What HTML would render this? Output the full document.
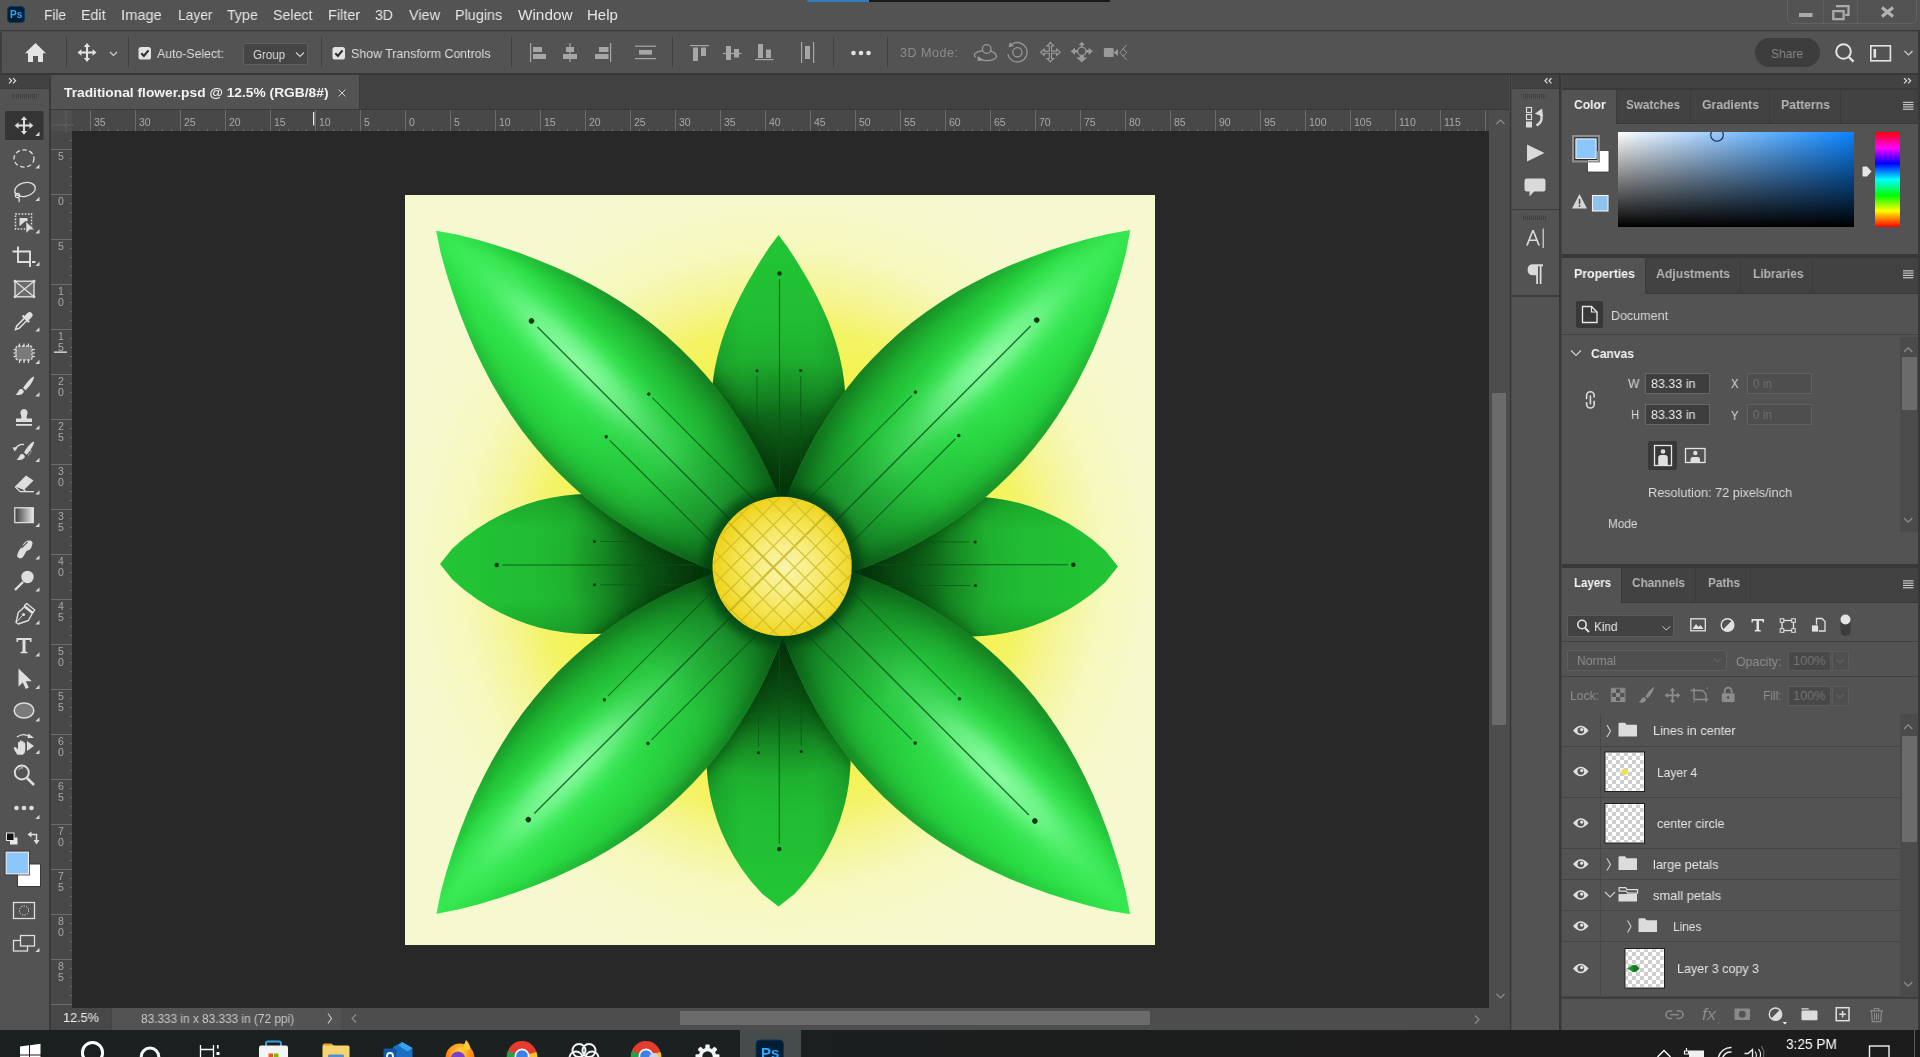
<!DOCTYPE html>
<html><head><meta charset="utf-8"><title>Photoshop</title><style>
html,body{margin:0;padding:0}
body{width:1920px;height:1057px;position:relative;overflow:hidden;background:#535353;font-family:"Liberation Sans",sans-serif}
.b{position:absolute;display:block}
.t{position:absolute;white-space:nowrap;transform-origin:0 50%;will-change:transform;font-family:"Liberation Sans",sans-serif}
</style></head><body>
<div class="b" style="left:0px;top:0px;width:1920px;height:30px;background:#535353;"></div>
<div class="b" style="left:0px;top:30px;width:1920px;height:1px;background:#3b3b3b;"></div>
<div class="b" style="left:0px;top:31px;width:1920px;height:1px;background:#4b4b4b;"></div>
<div class="b" style="left:807px;top:0px;width:62px;height:2px;background:#2f7fc0;border-radius:0 0 0 2px"></div>
<div class="b" style="left:869px;top:0px;width:241px;height:1.5px;background:#1a1a1a;"></div>
<div class="b" style="left:7px;top:6px;width:18px;height:17px;background:#001e36;border-radius:4px;border:1px solid #0c3a5e;box-sizing:border-box"></div><span class="t" style="left:10.20px;top:10.14px;font-size:10px;line-height:10px;color:#31a8ff;font-weight:bold;transform:scaleX(0.9646);">Ps</span>
<span class="t" style="left:44.00px;top:7.10px;font-size:15px;line-height:15px;color:#e6e6e6;transform:scaleX(0.9103);">File</span>
<span class="t" style="left:81.30px;top:7.10px;font-size:15px;line-height:15px;color:#e6e6e6;transform:scaleX(0.9479);">Edit</span>
<span class="t" style="left:121.20px;top:7.10px;font-size:15px;line-height:15px;color:#e6e6e6;transform:scaleX(0.9787);">Image</span>
<span class="t" style="left:177.50px;top:7.10px;font-size:15px;line-height:15px;color:#e6e6e6;transform:scaleX(0.9195);">Layer</span>
<span class="t" style="left:227.20px;top:7.10px;font-size:15px;line-height:15px;color:#e6e6e6;transform:scaleX(0.9472);">Type</span>
<span class="t" style="left:273.30px;top:7.10px;font-size:15px;line-height:15px;color:#e6e6e6;transform:scaleX(0.9451);">Select</span>
<span class="t" style="left:327.50px;top:7.10px;font-size:15px;line-height:15px;color:#e6e6e6;transform:scaleX(0.9660);">Filter</span>
<span class="t" style="left:375.00px;top:7.10px;font-size:15px;line-height:15px;color:#e6e6e6;transform:scaleX(0.9388);">3D</span>
<span class="t" style="left:408.70px;top:7.10px;font-size:15px;line-height:15px;color:#e6e6e6;transform:scaleX(0.9615);">View</span>
<span class="t" style="left:455.30px;top:7.10px;font-size:15px;line-height:15px;color:#e6e6e6;transform:scaleX(0.9594);">Plugins</span>
<span class="t" style="left:517.50px;top:7.10px;font-size:15px;line-height:15px;color:#e6e6e6;transform:scaleX(1.0216);">Window</span>
<span class="t" style="left:587.00px;top:7.10px;font-size:15px;line-height:15px;color:#e6e6e6;">Help</span>
<svg class="b" style="left:0;top:0" width="1920" height="1057" viewBox="0 0 1920 1057"><rect x="1787.5" y="-6" width="129" height="29.5" rx="5" fill="none" stroke="#626262" stroke-width="1"/><rect x="1823" y="0" width="1" height="23" fill="#5e5e5e"/><rect x="1857" y="0" width="1" height="23" fill="#5e5e5e"/><rect x="1799" y="13" width="13.5" height="4" fill="#ababab"/><path d="M1836 6.2h12.5v8.6h-3.4 M1833.3 11.2h10.3v8h-10.3z" fill="none" stroke="#ababab" stroke-width="2.3"/><path d="M1882 7.5L1893 16.5M1893 7.5L1882 16.5" stroke="#b4b4b4" stroke-width="3" fill="none"/></svg>
<div class="b" style="left:0px;top:32px;width:1918px;height:41px;background:#535353;"></div>
<div class="b" style="left:0px;top:32px;width:2px;height:41px;background:#3e3e3e;"></div>
<div class="b" style="left:0px;top:73px;width:1920px;height:1.5px;background:#383838;"></div>
<div class="b" style="left:65.5px;top:37px;width:1px;height:30px;background:#404040;"></div>
<div class="b" style="left:127.5px;top:37px;width:1px;height:30px;background:#404040;"></div>
<div class="b" style="left:321px;top:37px;width:1px;height:30px;background:#404040;"></div>
<div class="b" style="left:510.5px;top:37px;width:1px;height:30px;background:#404040;"></div>
<div class="b" style="left:672px;top:37px;width:1px;height:30px;background:#404040;"></div>
<div class="b" style="left:833px;top:37px;width:1px;height:30px;background:#404040;"></div>
<div class="b" style="left:886.5px;top:37px;width:1px;height:30px;background:#404040;"></div>
<span class="t" style="left:157.00px;top:47.00px;font-size:13px;line-height:13px;color:#dcdcdc;transform:scaleX(0.9461);">Auto-Select:</span>
<div class="b" style="left:243px;top:43px;width:65px;height:22px;background:#454545;border:1px solid #5f5f5f;box-sizing:border-box;border-radius:2px"></div>
<span class="t" style="left:253.00px;top:47.50px;font-size:13px;line-height:13px;color:#dcdcdc;transform:scaleX(0.8856);">Group</span>
<span class="t" style="left:351.00px;top:47.00px;font-size:13px;line-height:13px;color:#dcdcdc;transform:scaleX(0.9511);">Show Transform Controls</span>
<span class="t" style="left:899.50px;top:46.92px;font-size:12.5px;line-height:12.5px;color:#8c8c8c;transform:scaleX(1.0057);letter-spacing:0.5px;">3D Mode:</span>
<div class="b" style="left:1755px;top:38px;width:65px;height:29px;background:#3d3d3d;border-radius:15px"></div>
<span class="t" style="left:1771.00px;top:46.50px;font-size:13px;line-height:13px;color:#858585;transform:scaleX(0.9224);">Share</span>
<svg class="b" style="left:0;top:0" width="1920" height="1057" viewBox="0 0 1920 1057"><rect x="6" y="38" width="1" height="1" fill="#444"/><rect x="6" y="41" width="1" height="1" fill="#444"/><rect x="6" y="44" width="1" height="1" fill="#444"/><rect x="6" y="47" width="1" height="1" fill="#444"/><rect x="6" y="50" width="1" height="1" fill="#444"/><rect x="6" y="53" width="1" height="1" fill="#444"/><rect x="6" y="56" width="1" height="1" fill="#444"/><rect x="6" y="59" width="1" height="1" fill="#444"/><rect x="6" y="62" width="1" height="1" fill="#444"/><rect x="6" y="65" width="1" height="1" fill="#444"/><path d="M35.5 43L25 53.2H28V62H33V56H38V62H43V53.2H46Z" fill="#e4e4e4"/><path transform="translate(87 52.5)" d="M0 -9.5L3.2 -5.6H1V-1H5.6V-3.2L9.5 0L5.6 3.2V1H1V5.6H3.2L0 9.5L-3.2 5.6H-1V1H-5.6V3.2L-9.5 0L-5.6 -3.2V-1H-1V-5.6H-3.2Z" fill="#e4e4e4"/><path d="M110 52L113.5 55.5L117 52" stroke="#cfcfcf" stroke-width="1.2" fill="none"/><rect x="138.5" y="47" width="12.5" height="12.5" rx="2.6" fill="#e2e2e2"/><path d="M141.3 53.2l2.6 2.8l4.6 -5.6" stroke="#2f2f2f" stroke-width="2.1" fill="none"/><rect x="332.5" y="47" width="12.5" height="12.5" rx="2.6" fill="#e2e2e2"/><path d="M335.3 53.2l2.6 2.8l4.6 -5.6" stroke="#2f2f2f" stroke-width="2.1" fill="none"/><path d="M296 52.5L300 56.5L304 52.5" stroke="#cfcfcf" stroke-width="1.2" fill="none"/><g fill="#a6a6a6"><rect x="530" y="43" width="1.2" height="19"/><rect x="533" y="47" width="9" height="5"/><rect x="533" y="54" width="13" height="5"/><rect x="569.4" y="43" width="1.2" height="19"/><rect x="566" y="47" width="8" height="5"/><rect x="563" y="54" width="14" height="5"/><rect x="610" y="43" width="1.2" height="19"/><rect x="599" y="47" width="9.5" height="5"/><rect x="595" y="54" width="13.5" height="5"/><rect x="635" y="45.6" width="21" height="1.2"/><rect x="635" y="58" width="21" height="1.2"/><rect x="639" y="50" width="13" height="4.6"/><rect x="690" y="45" width="19" height="1.2"/><rect x="693" y="47.5" width="5" height="13.5"/><rect x="701" y="47.5" width="5" height="8.5"/><rect x="723" y="52.9" width="18.5" height="1.2"/><rect x="726" y="46" width="5" height="14"/><rect x="734" y="49" width="5" height="8.5"/><rect x="755" y="59" width="18.5" height="1.2"/><rect x="758" y="44" width="5" height="14"/><rect x="766" y="49.5" width="5" height="8.5"/><rect x="801" y="42" width="1.2" height="21"/><rect x="813" y="42" width="1.2" height="21"/><rect x="805" y="46" width="5" height="13"/></g><circle cx="853.5" cy="53" r="2.3" fill="#e2e2e2"/><circle cx="861" cy="53" r="2.3" fill="#e2e2e2"/><circle cx="868.5" cy="53" r="2.3" fill="#e2e2e2"/><g fill="none" stroke="#9a9a9a" stroke-width="1.25"><circle cx="986.700" cy="49" r="4.300"/><path d="M982.300 50.600C976 51.500 972.500 54.500 975.500 57.200M983.500 60.300C990 61.300 997.500 59.200 996.300 55.500C995.600 53.500 993.200 52 990.800 51.200"/><circle cx="1017.400" cy="52.200" r="4.600"/><path d="M1011.800 44.300A9.700 9.700 0 1 1 1007.900 54.200"/><path transform="translate(1050.400 52.200)" d="M0 -9.800L3.300 -6.300H1.100V-1.100H6.300V-3.300L9.800 0L6.300 3.300V1.100H1.100V6.300H3.300L0 9.800L-3.300 6.300H-1.100V1.100H-6.300V3.300L-9.800 0L-6.300 -3.300V-1.100H-1.100V-6.300H-3.300Z" stroke-width="1.100"/></g><path d="M977.500 56.300l7.800 4.300l-7.600 0.300z" fill="#9a9a9a"/><path d="M1008.600 47.300l1.200 -5l4 3.600z" fill="#9a9a9a"/><g fill="#9a9a9a"><circle cx="1081.800" cy="51.300" r="4.200" fill="none" stroke="#9a9a9a" stroke-width="1.250"/><path d="M1081.800 41.800l3 3.200h-1.900v1.600h-2.200v-1.600h-1.900z"/><path d="M1070.700 51.300l4.300 -3.600v2.300h2.600v2.600h-2.600v2.300z"/><path d="M1092.900 51.300l-4.300 -3.600v2.300h-2.600v2.600h2.600v2.300z"/><path d="M1081.800 62.300l-5.600 -4.800h3.400v-1.700h4.400v1.700h3.400z"/></g><rect x="1103.900" y="48" width="9.800" height="9" rx="1.300" fill="#9a9a9a"/><path d="M1113.700 52.500l4.300 -3.400v6.800z" fill="#9a9a9a"/><path d="M1126.600 45L1120 52.500L1126.600 60M1123.300 48.800L1126.700 52.500L1123.300 56.200" stroke="#9a9a9a" stroke-width="1" fill="none"/><circle cx="1843.5" cy="51.5" r="7.3" fill="none" stroke="#e4e4e4" stroke-width="2"/><path d="M1848.8 57L1853.5 61.6" stroke="#e4e4e4" stroke-width="2.4"/><rect x="1870.8" y="45.8" width="19.6" height="15" fill="none" stroke="#e4e4e4" stroke-width="1.6"/><rect x="1873.5" y="49" width="2.6" height="8.6" fill="#e4e4e4"/><path d="M1904.5 51L1908.5 55L1912.5 51" stroke="#cfcfcf" stroke-width="1.2" fill="none"/></svg>
<div class="b" style="left:0px;top:74.5px;width:49px;height:955.5px;background:#535353;"></div>
<div class="b" style="left:0px;top:74.5px;width:49px;height:13.5px;background:#424242;"></div>
<div class="b" style="left:0px;top:88px;width:49px;height:1px;background:#3c3c3c;"></div>
<div class="b" style="left:49px;top:74.5px;width:2px;height:955.5px;background:#3a3a3a;"></div>
<svg class="b" style="left:0;top:0" width="1920" height="1057" viewBox="0 0 1920 1057"><path d="M9 78.2L11.6 80.8L9 83.4M13 78.2L15.6 80.8L13 83.4" stroke="#e0e0e0" stroke-width="1.2" fill="none"/><rect x="12" y="94" width="1" height="4.5" fill="#404040"/><rect x="14" y="94" width="1" height="4.5" fill="#404040"/><rect x="16" y="94" width="1" height="4.5" fill="#404040"/><rect x="18" y="94" width="1" height="4.5" fill="#404040"/><rect x="20" y="94" width="1" height="4.5" fill="#404040"/><rect x="22" y="94" width="1" height="4.5" fill="#404040"/><rect x="24" y="94" width="1" height="4.5" fill="#404040"/><rect x="26" y="94" width="1" height="4.5" fill="#404040"/><rect x="28" y="94" width="1" height="4.5" fill="#404040"/><rect x="30" y="94" width="1" height="4.5" fill="#404040"/><rect x="32" y="94" width="1" height="4.5" fill="#404040"/><rect x="34" y="94" width="1" height="4.5" fill="#404040"/><rect x="36" y="94" width="1" height="4.5" fill="#404040"/><rect x="5" y="111" width="38.5" height="29" rx="1.5" fill="#353535"/><path transform="translate(24 125.5) scale(0.98)" d="M0 -9.5L3.2 -5.6H1V-1H5.6V-3.2L9.5 0L5.6 3.2V1H1V5.6H3.2L0 9.5L-3.2 5.6H-1V1H-5.6V3.2L-9.5 0L-5.6 -3.2V-1H-1V-5.6H-3.2Z" fill="#dedede"/><ellipse cx="24" cy="158.5" rx="10" ry="8.6" fill="none" stroke="#dedede" stroke-width="1.3" stroke-dasharray="4.4 2.6"/><ellipse cx="25" cy="189.5" rx="10.5" ry="6.8" fill="none" stroke="#dedede" stroke-width="1.4" transform="rotate(-14 25 189.5)"/><circle cx="17.5" cy="195.5" r="2.2" fill="none" stroke="#dedede" stroke-width="1.2"/><path d="M18 197.5q2.5 2 0.6 4.6" stroke="#dedede" stroke-width="1.2" fill="none"/><rect x="15.5" y="214" width="16" height="15" fill="none" stroke="#dedede" stroke-width="1.5" stroke-dasharray="1.6 1.5"/><path d="M19.5 218h8v3.2l-2.3 0l-5.7 5z" fill="#dedede"/><path d="M26 221.5l8.5 8.2h-4.6l-3.9 3.6z" fill="#dedede" stroke="#535353" stroke-width="0.6"/><path d="M18 246.500v15.500h12M12.500 251.500h17.500v15.500" stroke="#dedede" stroke-width="1.900" fill="none"/><rect x="32" y="261" width="3.500" height="2" fill="#dedede"/><rect x="15" y="281.200" width="19" height="15.600" fill="#6c6c6c" stroke="#dedede" stroke-width="1.400"/><path d="M15 281.2L34 296.8M34 281.2L15 296.8" stroke="#dedede" stroke-width="1.2"/><circle cx="15" cy="281.2" r="1.4" fill="#dedede"/><circle cx="34" cy="281.2" r="1.4" fill="#dedede"/><circle cx="15" cy="296.8" r="1.4" fill="#dedede"/><circle cx="34" cy="296.8" r="1.4" fill="#dedede"/><path d="M15.5 329.5l1.2 -3.6l8.5 -8.5l2.4 2.4l-8.5 8.5z" fill="none" stroke="#dedede" stroke-width="1.5"/><path d="M24.5 316l3 -3q2.2 -2 4.2 0t0 4.2l-3 3l1.2 1.2l-1.5 1.5l-6.6 -6.6l1.5 -1.5z" fill="#dedede"/><rect x="16" y="346" width="16" height="14" rx="2" fill="#7a7a7a" stroke="#dedede" stroke-width="1.3" stroke-dasharray="2.4 1.6"/><rect x="18.9" y="343.5" width="1.2" height="3" fill="#dedede"/><rect x="18.9" y="360" width="1.2" height="3" fill="#dedede"/><rect x="23.4" y="343.5" width="1.2" height="3" fill="#dedede"/><rect x="23.4" y="360" width="1.2" height="3" fill="#dedede"/><rect x="27.9" y="343.5" width="1.2" height="3" fill="#dedede"/><rect x="27.9" y="360" width="1.2" height="3" fill="#dedede"/><rect x="13.5" y="348.9" width="3" height="1.2" fill="#dedede"/><rect x="32" y="348.9" width="3" height="1.2" fill="#dedede"/><rect x="13.5" y="352.4" width="3" height="1.2" fill="#dedede"/><rect x="32" y="352.4" width="3" height="1.2" fill="#dedede"/><rect x="13.5" y="355.9" width="3" height="1.2" fill="#dedede"/><rect x="32" y="355.9" width="3" height="1.2" fill="#dedede"/><path d="M33.5 376.5q-5 3 -10.5 11.5l2.6 2.2q7 -7 8.6 -13z" fill="#dedede"/><path d="M22 389q-3 -0.4 -3.8 2.4q-0.5 2.2 -2.8 3q5.4 1.8 8 -1.6q1.2 -1.8 -1.4 -3.8z" fill="#dedede"/><path d="M24 409a3.6 3.6 0 0 1 3.3 5.2q-1 2 -0.6 4.3h5.3v3.6h-16v-3.6h5.3q0.4 -2.3 -0.6 -4.3a3.6 3.6 0 0 1 3.3 -5.2z" fill="#dedede"/><rect x="16" y="424" width="16" height="1.8" fill="#dedede"/><path d="M33.5 441.5q-5 3 -9.5 11l2.6 2.2q6 -6.500 7.6 -12.500z" fill="#dedede"/><path d="M23 454q-3 -0.400 -3.800 2.400q-0.500 2.200 -2.800 3q5.400 1.800 8 -1.600q1.200 -1.800 -1.400 -3.800z" fill="#dedede"/><path d="M15.500 449.500q2 -5.500 8.500 -5" stroke="#dedede" stroke-width="1.300" fill="none"/><path d="M12.500 447.500l5 -0.500l-2.600 4.500z" fill="#dedede"/><path d="M28 455q3 -1 3 -5" stroke="#dedede" stroke-width="1" stroke-dasharray="1.2 1.2" fill="none"/><path d="M15 486.500l11 -11l7.500 5l-9.500 9.500z" fill="#dedede"/><path d="M15 486.500l4.800 5h6l-6 -6.200" fill="none" stroke="#dedede" stroke-width="1.200"/><rect x="20" y="491" width="14" height="1.300" fill="#dedede"/><defs><linearGradient id="tg" x1="0" y1="0" x2="1" y2="0"><stop offset="0" stop-color="#3c3c3c"/><stop offset="1" stop-color="#e8e8e8"/></linearGradient></defs><rect x="14.800" y="507.800" width="18.500" height="14.800" fill="url(#tg)" stroke="#dedede" stroke-width="1.300"/><path d="M17 556.500q1 -6 5.500 -10.500q2 -6 8 -5.500q3 1 1.500 5q-1 4.500 -5.500 5.500l-2.500 4.500q-1.500 3 -4.500 3z" fill="#dedede"/><path d="M21.500 548l6 -6" stroke="#535353" stroke-width="1.100"/><circle cx="27.500" cy="577" r="6.200" fill="#dedede"/><path d="M23 582l-8 8" stroke="#dedede" stroke-width="2.400"/><path d="M16 622.500l2.300 -10l6 -5.500l8 6.500l-4 7l-10 3.500z M24.500 605.500l2.200 -2l8 6.500l-1.500 2.500z" fill="none" stroke="#dedede" stroke-width="1.400" stroke-linejoin="round"/><circle cx="23.500" cy="614.500" r="1.600" fill="#dedede"/><path d="M16.500 622l6 -6.500" stroke="#dedede" stroke-width="1"/><path d="M16.500 638h15v4h-1.300l-0.500 -2h-4.200v11.500l2 0.500v1.300h-7v-1.300l2 -0.500v-11.500h-4.200l-0.500 2h-1.300z" fill="#dedede"/><path d="M18.500 668.500v18l4.300 -4l3 6.500l3 -1.400l-3 -6.300h6z" fill="#dedede"/><ellipse cx="24" cy="710.500" rx="9.800" ry="7.600" fill="#7a7a7a" stroke="#dedede" stroke-width="1.500"/><path d="M16 752.500q-2.500 -3.500 -2 -5q1 -1 2.500 0.500l1.500 1.500v-7q0.800 -1.300 1.800 0v-1.500q0.900 -1.300 1.900 0v0.700q0.900 -1.200 1.900 0v1.300q0.900 -1 1.700 0.200v6.500q0 3.500 -2.500 5h-5.500z" fill="#dedede"/><path d="M27 741l7 5l-7 5z" fill="#dedede"/><path d="M17 737q6 -4.500 12.500 -0.500" stroke="#dedede" stroke-width="1.300" fill="none"/><path d="M28.500 733.500l5.500 4.500h-6.500z" fill="#dedede"/><circle cx="21.800" cy="772.500" r="7" fill="none" stroke="#dedede" stroke-width="1.900"/><path d="M27 778l7 7" stroke="#dedede" stroke-width="2.600"/><path d="M18.500 770q1.500 -2.600 4.500 -2.200" stroke="#dedede" stroke-width="1" fill="none"/><circle cx="16.5" cy="808" r="2.300" fill="#dedede"/><circle cx="24" cy="808" r="2.300" fill="#dedede"/><circle cx="31.5" cy="808" r="2.300" fill="#dedede"/><path d="M39.5 136l0 -4.2l-4.2 4.2z" fill="#d6d6d6"/><path d="M39.5 168.5l0 -4.2l-4.2 4.2z" fill="#d6d6d6"/><path d="M39.5 201l0 -4.2l-4.2 4.2z" fill="#d6d6d6"/><path d="M39.5 233.5l0 -4.2l-4.2 4.2z" fill="#d6d6d6"/><path d="M39.5 266l0 -4.2l-4.2 4.2z" fill="#d6d6d6"/><path d="M39.5 331.5l0 -4.2l-4.2 4.2z" fill="#d6d6d6"/><path d="M39.5 364l0 -4.2l-4.2 4.2z" fill="#d6d6d6"/><path d="M39.5 396.5l0 -4.2l-4.2 4.2z" fill="#d6d6d6"/><path d="M39.5 429.5l0 -4.2l-4.2 4.2z" fill="#d6d6d6"/><path d="M39.5 462l0 -4.2l-4.2 4.2z" fill="#d6d6d6"/><path d="M39.5 494.5l0 -4.2l-4.2 4.2z" fill="#d6d6d6"/><path d="M39.5 527l0 -4.2l-4.2 4.2z" fill="#d6d6d6"/><path d="M39.5 559.5l0 -4.2l-4.2 4.2z" fill="#d6d6d6"/><path d="M39.5 591.5l0 -4.2l-4.2 4.2z" fill="#d6d6d6"/><path d="M39.5 624.5l0 -4.2l-4.2 4.2z" fill="#d6d6d6"/><path d="M39.5 656.5l0 -4.2l-4.2 4.2z" fill="#d6d6d6"/><path d="M39.5 689l0 -4.2l-4.2 4.2z" fill="#d6d6d6"/><path d="M39.5 721.5l0 -4.2l-4.2 4.2z" fill="#d6d6d6"/><path d="M39.5 754l0 -4.2l-4.2 4.2z" fill="#d6d6d6"/><path d="M39.5 819l0 -4.2l-4.2 4.2z" fill="#d6d6d6"/><rect x="10" y="837.500" width="7.500" height="7" fill="#e8e8e8"/><rect x="6.500" y="833" width="7.500" height="7.500" fill="#111" stroke="#e8e8e8" stroke-width="1"/><path d="M31 834.500h5.500v6.500" stroke="#dedede" stroke-width="1.500" fill="none"/><path d="M27.500 834.500l4 -3v6z" fill="#dedede"/><path d="M36.500 844.500l-3 -4.500h6z" fill="#dedede"/><rect x="17.500" y="864" width="23" height="22.500" fill="#ffffff" stroke="#3a3a3a" stroke-width="1"/><rect x="6" y="852" width="22.500" height="22" fill="#8dc6fb" stroke="#f0f0f0" stroke-width="1.200"/><rect x="5" y="851" width="24.500" height="24" fill="none" stroke="#3a3a3a" stroke-width="0.800"/><rect x="13.500" y="902.500" width="21" height="16" fill="none" stroke="#dedede" stroke-width="1.300"/><circle cx="24" cy="910.500" r="4.600" fill="none" stroke="#dedede" stroke-width="1" stroke-dasharray="1.300 1.300"/><rect x="13.500" y="940.500" width="14" height="10.500" fill="none" stroke="#dedede" stroke-width="1.300"/><rect x="20.500" y="935.500" width="14" height="10.500" fill="#535353" stroke="#dedede" stroke-width="1.300"/><path d="M39.5 952l0 -4.2l-4.2 4.2z" fill="#d6d6d6"/></svg>
<div class="b" style="left:51px;top:74.5px;width:1459px;height:34.5px;background:#424242;"></div>
<div class="b" style="left:51px;top:75px;width:307.5px;height:34px;background:#535353;"></div>
<div class="b" style="left:358.5px;top:75px;width:1px;height:34px;background:#3c3c3c;"></div>
<span class="t" style="left:64.00px;top:85.60px;font-size:13px;line-height:13px;color:#f2f2f2;font-weight:bold;transform:scaleX(1.0596);">Traditional flower.psd @ 12.5% (RGB/8#)</span>
<svg class="b" style="left:338px;top:89px;" width="8" height="8" viewBox="0 0 8 8"><path d="M0.5 0.5L7.5 7.5M7.5 0.5L0.5 7.5" stroke="#cfcfcf" stroke-width="1" fill="none"/></svg>
<div class="b" style="left:51px;top:109px;width:1459px;height:1px;background:#383838;"></div>
<div class="b" style="left:51px;top:110px;width:1438px;height:21px;background:#484848;"></div>
<div class="b" style="left:51px;top:131px;width:21px;height:877px;background:#484848;"></div>
<div class="b" style="left:51px;top:110px;width:21px;height:21px;background:#4e4e4e;"></div>
<svg class="b" style="left:0;top:0" width="1500" height="132" viewBox="0 0 1500 132"><rect x="81.0" y="129" width="1" height="2" fill="#8a8a8a" opacity="0.5"/><rect x="90.0" y="110" width="1" height="21" fill="#6c6c6c"/><rect x="99.0" y="129" width="1" height="2" fill="#8a8a8a" opacity="0.5"/><rect x="108.0" y="129" width="1" height="2" fill="#8a8a8a" opacity="0.5"/><rect x="117.0" y="129" width="1" height="2" fill="#8a8a8a" opacity="0.5"/><rect x="126.0" y="129" width="1" height="2" fill="#8a8a8a" opacity="0.5"/><rect x="135.0" y="110" width="1" height="21" fill="#6c6c6c"/><rect x="144.0" y="129" width="1" height="2" fill="#8a8a8a" opacity="0.5"/><rect x="153.0" y="129" width="1" height="2" fill="#8a8a8a" opacity="0.5"/><rect x="162.0" y="129" width="1" height="2" fill="#8a8a8a" opacity="0.5"/><rect x="171.0" y="129" width="1" height="2" fill="#8a8a8a" opacity="0.5"/><rect x="180.0" y="110" width="1" height="21" fill="#6c6c6c"/><rect x="189.0" y="129" width="1" height="2" fill="#8a8a8a" opacity="0.5"/><rect x="198.0" y="129" width="1" height="2" fill="#8a8a8a" opacity="0.5"/><rect x="207.0" y="129" width="1" height="2" fill="#8a8a8a" opacity="0.5"/><rect x="216.0" y="129" width="1" height="2" fill="#8a8a8a" opacity="0.5"/><rect x="225.0" y="110" width="1" height="21" fill="#6c6c6c"/><rect x="234.0" y="129" width="1" height="2" fill="#8a8a8a" opacity="0.5"/><rect x="243.0" y="129" width="1" height="2" fill="#8a8a8a" opacity="0.5"/><rect x="252.0" y="129" width="1" height="2" fill="#8a8a8a" opacity="0.5"/><rect x="261.0" y="129" width="1" height="2" fill="#8a8a8a" opacity="0.5"/><rect x="270.0" y="110" width="1" height="21" fill="#6c6c6c"/><rect x="279.0" y="129" width="1" height="2" fill="#8a8a8a" opacity="0.5"/><rect x="288.0" y="129" width="1" height="2" fill="#8a8a8a" opacity="0.5"/><rect x="297.0" y="129" width="1" height="2" fill="#8a8a8a" opacity="0.5"/><rect x="306.0" y="129" width="1" height="2" fill="#8a8a8a" opacity="0.5"/><rect x="315.0" y="110" width="1" height="21" fill="#6c6c6c"/><rect x="324.0" y="129" width="1" height="2" fill="#8a8a8a" opacity="0.5"/><rect x="333.0" y="129" width="1" height="2" fill="#8a8a8a" opacity="0.5"/><rect x="342.0" y="129" width="1" height="2" fill="#8a8a8a" opacity="0.5"/><rect x="351.0" y="129" width="1" height="2" fill="#8a8a8a" opacity="0.5"/><rect x="360.0" y="110" width="1" height="21" fill="#6c6c6c"/><rect x="369.0" y="129" width="1" height="2" fill="#8a8a8a" opacity="0.5"/><rect x="378.0" y="129" width="1" height="2" fill="#8a8a8a" opacity="0.5"/><rect x="387.0" y="129" width="1" height="2" fill="#8a8a8a" opacity="0.5"/><rect x="396.0" y="129" width="1" height="2" fill="#8a8a8a" opacity="0.5"/><rect x="405.0" y="110" width="1" height="21" fill="#6c6c6c"/><rect x="414.0" y="129" width="1" height="2" fill="#8a8a8a" opacity="0.5"/><rect x="423.0" y="129" width="1" height="2" fill="#8a8a8a" opacity="0.5"/><rect x="432.0" y="129" width="1" height="2" fill="#8a8a8a" opacity="0.5"/><rect x="441.0" y="129" width="1" height="2" fill="#8a8a8a" opacity="0.5"/><rect x="450.0" y="110" width="1" height="21" fill="#6c6c6c"/><rect x="459.0" y="129" width="1" height="2" fill="#8a8a8a" opacity="0.5"/><rect x="468.0" y="129" width="1" height="2" fill="#8a8a8a" opacity="0.5"/><rect x="477.0" y="129" width="1" height="2" fill="#8a8a8a" opacity="0.5"/><rect x="486.0" y="129" width="1" height="2" fill="#8a8a8a" opacity="0.5"/><rect x="495.0" y="110" width="1" height="21" fill="#6c6c6c"/><rect x="504.0" y="129" width="1" height="2" fill="#8a8a8a" opacity="0.5"/><rect x="513.0" y="129" width="1" height="2" fill="#8a8a8a" opacity="0.5"/><rect x="522.0" y="129" width="1" height="2" fill="#8a8a8a" opacity="0.5"/><rect x="531.0" y="129" width="1" height="2" fill="#8a8a8a" opacity="0.5"/><rect x="540.0" y="110" width="1" height="21" fill="#6c6c6c"/><rect x="549.0" y="129" width="1" height="2" fill="#8a8a8a" opacity="0.5"/><rect x="558.0" y="129" width="1" height="2" fill="#8a8a8a" opacity="0.5"/><rect x="567.0" y="129" width="1" height="2" fill="#8a8a8a" opacity="0.5"/><rect x="576.0" y="129" width="1" height="2" fill="#8a8a8a" opacity="0.5"/><rect x="585.0" y="110" width="1" height="21" fill="#6c6c6c"/><rect x="594.0" y="129" width="1" height="2" fill="#8a8a8a" opacity="0.5"/><rect x="603.0" y="129" width="1" height="2" fill="#8a8a8a" opacity="0.5"/><rect x="612.0" y="129" width="1" height="2" fill="#8a8a8a" opacity="0.5"/><rect x="621.0" y="129" width="1" height="2" fill="#8a8a8a" opacity="0.5"/><rect x="630.0" y="110" width="1" height="21" fill="#6c6c6c"/><rect x="639.0" y="129" width="1" height="2" fill="#8a8a8a" opacity="0.5"/><rect x="648.0" y="129" width="1" height="2" fill="#8a8a8a" opacity="0.5"/><rect x="657.0" y="129" width="1" height="2" fill="#8a8a8a" opacity="0.5"/><rect x="666.0" y="129" width="1" height="2" fill="#8a8a8a" opacity="0.5"/><rect x="675.0" y="110" width="1" height="21" fill="#6c6c6c"/><rect x="684.0" y="129" width="1" height="2" fill="#8a8a8a" opacity="0.5"/><rect x="693.0" y="129" width="1" height="2" fill="#8a8a8a" opacity="0.5"/><rect x="702.0" y="129" width="1" height="2" fill="#8a8a8a" opacity="0.5"/><rect x="711.0" y="129" width="1" height="2" fill="#8a8a8a" opacity="0.5"/><rect x="720.0" y="110" width="1" height="21" fill="#6c6c6c"/><rect x="729.0" y="129" width="1" height="2" fill="#8a8a8a" opacity="0.5"/><rect x="738.0" y="129" width="1" height="2" fill="#8a8a8a" opacity="0.5"/><rect x="747.0" y="129" width="1" height="2" fill="#8a8a8a" opacity="0.5"/><rect x="756.0" y="129" width="1" height="2" fill="#8a8a8a" opacity="0.5"/><rect x="765.0" y="110" width="1" height="21" fill="#6c6c6c"/><rect x="774.0" y="129" width="1" height="2" fill="#8a8a8a" opacity="0.5"/><rect x="783.0" y="129" width="1" height="2" fill="#8a8a8a" opacity="0.5"/><rect x="792.0" y="129" width="1" height="2" fill="#8a8a8a" opacity="0.5"/><rect x="801.0" y="129" width="1" height="2" fill="#8a8a8a" opacity="0.5"/><rect x="810.0" y="110" width="1" height="21" fill="#6c6c6c"/><rect x="819.0" y="129" width="1" height="2" fill="#8a8a8a" opacity="0.5"/><rect x="828.0" y="129" width="1" height="2" fill="#8a8a8a" opacity="0.5"/><rect x="837.0" y="129" width="1" height="2" fill="#8a8a8a" opacity="0.5"/><rect x="846.0" y="129" width="1" height="2" fill="#8a8a8a" opacity="0.5"/><rect x="855.0" y="110" width="1" height="21" fill="#6c6c6c"/><rect x="864.0" y="129" width="1" height="2" fill="#8a8a8a" opacity="0.5"/><rect x="873.0" y="129" width="1" height="2" fill="#8a8a8a" opacity="0.5"/><rect x="882.0" y="129" width="1" height="2" fill="#8a8a8a" opacity="0.5"/><rect x="891.0" y="129" width="1" height="2" fill="#8a8a8a" opacity="0.5"/><rect x="900.0" y="110" width="1" height="21" fill="#6c6c6c"/><rect x="909.0" y="129" width="1" height="2" fill="#8a8a8a" opacity="0.5"/><rect x="918.0" y="129" width="1" height="2" fill="#8a8a8a" opacity="0.5"/><rect x="927.0" y="129" width="1" height="2" fill="#8a8a8a" opacity="0.5"/><rect x="936.0" y="129" width="1" height="2" fill="#8a8a8a" opacity="0.5"/><rect x="945.0" y="110" width="1" height="21" fill="#6c6c6c"/><rect x="954.0" y="129" width="1" height="2" fill="#8a8a8a" opacity="0.5"/><rect x="963.0" y="129" width="1" height="2" fill="#8a8a8a" opacity="0.5"/><rect x="972.0" y="129" width="1" height="2" fill="#8a8a8a" opacity="0.5"/><rect x="981.0" y="129" width="1" height="2" fill="#8a8a8a" opacity="0.5"/><rect x="990.0" y="110" width="1" height="21" fill="#6c6c6c"/><rect x="999.0" y="129" width="1" height="2" fill="#8a8a8a" opacity="0.5"/><rect x="1008.0" y="129" width="1" height="2" fill="#8a8a8a" opacity="0.5"/><rect x="1017.0" y="129" width="1" height="2" fill="#8a8a8a" opacity="0.5"/><rect x="1026.0" y="129" width="1" height="2" fill="#8a8a8a" opacity="0.5"/><rect x="1035.0" y="110" width="1" height="21" fill="#6c6c6c"/><rect x="1044.0" y="129" width="1" height="2" fill="#8a8a8a" opacity="0.5"/><rect x="1053.0" y="129" width="1" height="2" fill="#8a8a8a" opacity="0.5"/><rect x="1062.0" y="129" width="1" height="2" fill="#8a8a8a" opacity="0.5"/><rect x="1071.0" y="129" width="1" height="2" fill="#8a8a8a" opacity="0.5"/><rect x="1080.0" y="110" width="1" height="21" fill="#6c6c6c"/><rect x="1089.0" y="129" width="1" height="2" fill="#8a8a8a" opacity="0.5"/><rect x="1098.0" y="129" width="1" height="2" fill="#8a8a8a" opacity="0.5"/><rect x="1107.0" y="129" width="1" height="2" fill="#8a8a8a" opacity="0.5"/><rect x="1116.0" y="129" width="1" height="2" fill="#8a8a8a" opacity="0.5"/><rect x="1125.0" y="110" width="1" height="21" fill="#6c6c6c"/><rect x="1134.0" y="129" width="1" height="2" fill="#8a8a8a" opacity="0.5"/><rect x="1143.0" y="129" width="1" height="2" fill="#8a8a8a" opacity="0.5"/><rect x="1152.0" y="129" width="1" height="2" fill="#8a8a8a" opacity="0.5"/><rect x="1161.0" y="129" width="1" height="2" fill="#8a8a8a" opacity="0.5"/><rect x="1170.0" y="110" width="1" height="21" fill="#6c6c6c"/><rect x="1179.0" y="129" width="1" height="2" fill="#8a8a8a" opacity="0.5"/><rect x="1188.0" y="129" width="1" height="2" fill="#8a8a8a" opacity="0.5"/><rect x="1197.0" y="129" width="1" height="2" fill="#8a8a8a" opacity="0.5"/><rect x="1206.0" y="129" width="1" height="2" fill="#8a8a8a" opacity="0.5"/><rect x="1215.0" y="110" width="1" height="21" fill="#6c6c6c"/><rect x="1224.0" y="129" width="1" height="2" fill="#8a8a8a" opacity="0.5"/><rect x="1233.0" y="129" width="1" height="2" fill="#8a8a8a" opacity="0.5"/><rect x="1242.0" y="129" width="1" height="2" fill="#8a8a8a" opacity="0.5"/><rect x="1251.0" y="129" width="1" height="2" fill="#8a8a8a" opacity="0.5"/><rect x="1260.0" y="110" width="1" height="21" fill="#6c6c6c"/><rect x="1269.0" y="129" width="1" height="2" fill="#8a8a8a" opacity="0.5"/><rect x="1278.0" y="129" width="1" height="2" fill="#8a8a8a" opacity="0.5"/><rect x="1287.0" y="129" width="1" height="2" fill="#8a8a8a" opacity="0.5"/><rect x="1296.0" y="129" width="1" height="2" fill="#8a8a8a" opacity="0.5"/><rect x="1305.0" y="110" width="1" height="21" fill="#6c6c6c"/><rect x="1314.0" y="129" width="1" height="2" fill="#8a8a8a" opacity="0.5"/><rect x="1323.0" y="129" width="1" height="2" fill="#8a8a8a" opacity="0.5"/><rect x="1332.0" y="129" width="1" height="2" fill="#8a8a8a" opacity="0.5"/><rect x="1341.0" y="129" width="1" height="2" fill="#8a8a8a" opacity="0.5"/><rect x="1350.0" y="110" width="1" height="21" fill="#6c6c6c"/><rect x="1359.0" y="129" width="1" height="2" fill="#8a8a8a" opacity="0.5"/><rect x="1368.0" y="129" width="1" height="2" fill="#8a8a8a" opacity="0.5"/><rect x="1377.0" y="129" width="1" height="2" fill="#8a8a8a" opacity="0.5"/><rect x="1386.0" y="129" width="1" height="2" fill="#8a8a8a" opacity="0.5"/><rect x="1395.0" y="110" width="1" height="21" fill="#6c6c6c"/><rect x="1404.0" y="129" width="1" height="2" fill="#8a8a8a" opacity="0.5"/><rect x="1413.0" y="129" width="1" height="2" fill="#8a8a8a" opacity="0.5"/><rect x="1422.0" y="129" width="1" height="2" fill="#8a8a8a" opacity="0.5"/><rect x="1431.0" y="129" width="1" height="2" fill="#8a8a8a" opacity="0.5"/><rect x="1440.0" y="110" width="1" height="21" fill="#6c6c6c"/><rect x="1449.0" y="129" width="1" height="2" fill="#8a8a8a" opacity="0.5"/><rect x="1458.0" y="129" width="1" height="2" fill="#8a8a8a" opacity="0.5"/><rect x="1467.0" y="129" width="1" height="2" fill="#8a8a8a" opacity="0.5"/><rect x="1476.0" y="129" width="1" height="2" fill="#8a8a8a" opacity="0.5"/><rect x="1485.0" y="110" width="1" height="21" fill="#6c6c6c"/><rect x="313" y="112" width="1.3" height="13.5" fill="#e8e8e8"/></svg>
<span class="t" style="left:93.50px;top:117.11px;font-size:10.5px;line-height:10.5px;color:#a8a8a8;">35</span>
<span class="t" style="left:138.50px;top:117.11px;font-size:10.5px;line-height:10.5px;color:#a8a8a8;">30</span>
<span class="t" style="left:183.50px;top:117.11px;font-size:10.5px;line-height:10.5px;color:#a8a8a8;">25</span>
<span class="t" style="left:228.50px;top:117.11px;font-size:10.5px;line-height:10.5px;color:#a8a8a8;">20</span>
<span class="t" style="left:273.50px;top:117.11px;font-size:10.5px;line-height:10.5px;color:#a8a8a8;">15</span>
<span class="t" style="left:318.50px;top:117.11px;font-size:10.5px;line-height:10.5px;color:#a8a8a8;">10</span>
<span class="t" style="left:363.50px;top:117.11px;font-size:10.5px;line-height:10.5px;color:#a8a8a8;">5</span>
<span class="t" style="left:408.50px;top:117.11px;font-size:10.5px;line-height:10.5px;color:#a8a8a8;">0</span>
<span class="t" style="left:453.50px;top:117.11px;font-size:10.5px;line-height:10.5px;color:#a8a8a8;">5</span>
<span class="t" style="left:498.50px;top:117.11px;font-size:10.5px;line-height:10.5px;color:#a8a8a8;">10</span>
<span class="t" style="left:543.50px;top:117.11px;font-size:10.5px;line-height:10.5px;color:#a8a8a8;">15</span>
<span class="t" style="left:588.50px;top:117.11px;font-size:10.5px;line-height:10.5px;color:#a8a8a8;">20</span>
<span class="t" style="left:633.50px;top:117.11px;font-size:10.5px;line-height:10.5px;color:#a8a8a8;">25</span>
<span class="t" style="left:678.50px;top:117.11px;font-size:10.5px;line-height:10.5px;color:#a8a8a8;">30</span>
<span class="t" style="left:723.50px;top:117.11px;font-size:10.5px;line-height:10.5px;color:#a8a8a8;">35</span>
<span class="t" style="left:768.50px;top:117.11px;font-size:10.5px;line-height:10.5px;color:#a8a8a8;">40</span>
<span class="t" style="left:813.50px;top:117.11px;font-size:10.5px;line-height:10.5px;color:#a8a8a8;">45</span>
<span class="t" style="left:858.50px;top:117.11px;font-size:10.5px;line-height:10.5px;color:#a8a8a8;">50</span>
<span class="t" style="left:903.50px;top:117.11px;font-size:10.5px;line-height:10.5px;color:#a8a8a8;">55</span>
<span class="t" style="left:948.50px;top:117.11px;font-size:10.5px;line-height:10.5px;color:#a8a8a8;">60</span>
<span class="t" style="left:993.50px;top:117.11px;font-size:10.5px;line-height:10.5px;color:#a8a8a8;">65</span>
<span class="t" style="left:1038.50px;top:117.11px;font-size:10.5px;line-height:10.5px;color:#a8a8a8;">70</span>
<span class="t" style="left:1083.50px;top:117.11px;font-size:10.5px;line-height:10.5px;color:#a8a8a8;">75</span>
<span class="t" style="left:1128.50px;top:117.11px;font-size:10.5px;line-height:10.5px;color:#a8a8a8;">80</span>
<span class="t" style="left:1173.50px;top:117.11px;font-size:10.5px;line-height:10.5px;color:#a8a8a8;">85</span>
<span class="t" style="left:1218.50px;top:117.11px;font-size:10.5px;line-height:10.5px;color:#a8a8a8;">90</span>
<span class="t" style="left:1263.50px;top:117.11px;font-size:10.5px;line-height:10.5px;color:#a8a8a8;">95</span>
<span class="t" style="left:1308.50px;top:117.11px;font-size:10.5px;line-height:10.5px;color:#a8a8a8;">100</span>
<span class="t" style="left:1353.50px;top:117.11px;font-size:10.5px;line-height:10.5px;color:#a8a8a8;">105</span>
<span class="t" style="left:1398.50px;top:117.11px;font-size:10.5px;line-height:10.5px;color:#a8a8a8;">110</span>
<span class="t" style="left:1443.50px;top:117.11px;font-size:10.5px;line-height:10.5px;color:#a8a8a8;">115</span>
<svg class="b" style="left:0;top:0" width="80" height="1010" viewBox="0 0 80 1010"><rect x="70" y="140.0" width="2" height="1" fill="#8a8a8a" opacity="0.5"/><rect x="51" y="149.0" width="21" height="1" fill="#6c6c6c"/><rect x="70" y="158.0" width="2" height="1" fill="#8a8a8a" opacity="0.5"/><rect x="70" y="167.0" width="2" height="1" fill="#8a8a8a" opacity="0.5"/><rect x="70" y="176.0" width="2" height="1" fill="#8a8a8a" opacity="0.5"/><rect x="70" y="185.0" width="2" height="1" fill="#8a8a8a" opacity="0.5"/><rect x="51" y="194.0" width="21" height="1" fill="#6c6c6c"/><rect x="70" y="203.0" width="2" height="1" fill="#8a8a8a" opacity="0.5"/><rect x="70" y="212.0" width="2" height="1" fill="#8a8a8a" opacity="0.5"/><rect x="70" y="221.0" width="2" height="1" fill="#8a8a8a" opacity="0.5"/><rect x="70" y="230.0" width="2" height="1" fill="#8a8a8a" opacity="0.5"/><rect x="51" y="239.0" width="21" height="1" fill="#6c6c6c"/><rect x="70" y="248.0" width="2" height="1" fill="#8a8a8a" opacity="0.5"/><rect x="70" y="257.0" width="2" height="1" fill="#8a8a8a" opacity="0.5"/><rect x="70" y="266.0" width="2" height="1" fill="#8a8a8a" opacity="0.5"/><rect x="70" y="275.0" width="2" height="1" fill="#8a8a8a" opacity="0.5"/><rect x="51" y="284.0" width="21" height="1" fill="#6c6c6c"/><rect x="70" y="293.0" width="2" height="1" fill="#8a8a8a" opacity="0.5"/><rect x="70" y="302.0" width="2" height="1" fill="#8a8a8a" opacity="0.5"/><rect x="70" y="311.0" width="2" height="1" fill="#8a8a8a" opacity="0.5"/><rect x="70" y="320.0" width="2" height="1" fill="#8a8a8a" opacity="0.5"/><rect x="51" y="329.0" width="21" height="1" fill="#6c6c6c"/><rect x="70" y="338.0" width="2" height="1" fill="#8a8a8a" opacity="0.5"/><rect x="70" y="347.0" width="2" height="1" fill="#8a8a8a" opacity="0.5"/><rect x="70" y="356.0" width="2" height="1" fill="#8a8a8a" opacity="0.5"/><rect x="70" y="365.0" width="2" height="1" fill="#8a8a8a" opacity="0.5"/><rect x="51" y="374.0" width="21" height="1" fill="#6c6c6c"/><rect x="70" y="383.0" width="2" height="1" fill="#8a8a8a" opacity="0.5"/><rect x="70" y="392.0" width="2" height="1" fill="#8a8a8a" opacity="0.5"/><rect x="70" y="401.0" width="2" height="1" fill="#8a8a8a" opacity="0.5"/><rect x="70" y="410.0" width="2" height="1" fill="#8a8a8a" opacity="0.5"/><rect x="51" y="419.0" width="21" height="1" fill="#6c6c6c"/><rect x="70" y="428.0" width="2" height="1" fill="#8a8a8a" opacity="0.5"/><rect x="70" y="437.0" width="2" height="1" fill="#8a8a8a" opacity="0.5"/><rect x="70" y="446.0" width="2" height="1" fill="#8a8a8a" opacity="0.5"/><rect x="70" y="455.0" width="2" height="1" fill="#8a8a8a" opacity="0.5"/><rect x="51" y="464.0" width="21" height="1" fill="#6c6c6c"/><rect x="70" y="473.0" width="2" height="1" fill="#8a8a8a" opacity="0.5"/><rect x="70" y="482.0" width="2" height="1" fill="#8a8a8a" opacity="0.5"/><rect x="70" y="491.0" width="2" height="1" fill="#8a8a8a" opacity="0.5"/><rect x="70" y="500.0" width="2" height="1" fill="#8a8a8a" opacity="0.5"/><rect x="51" y="509.0" width="21" height="1" fill="#6c6c6c"/><rect x="70" y="518.0" width="2" height="1" fill="#8a8a8a" opacity="0.5"/><rect x="70" y="527.0" width="2" height="1" fill="#8a8a8a" opacity="0.5"/><rect x="70" y="536.0" width="2" height="1" fill="#8a8a8a" opacity="0.5"/><rect x="70" y="545.0" width="2" height="1" fill="#8a8a8a" opacity="0.5"/><rect x="51" y="554.0" width="21" height="1" fill="#6c6c6c"/><rect x="70" y="563.0" width="2" height="1" fill="#8a8a8a" opacity="0.5"/><rect x="70" y="572.0" width="2" height="1" fill="#8a8a8a" opacity="0.5"/><rect x="70" y="581.0" width="2" height="1" fill="#8a8a8a" opacity="0.5"/><rect x="70" y="590.0" width="2" height="1" fill="#8a8a8a" opacity="0.5"/><rect x="51" y="599.0" width="21" height="1" fill="#6c6c6c"/><rect x="70" y="608.0" width="2" height="1" fill="#8a8a8a" opacity="0.5"/><rect x="70" y="617.0" width="2" height="1" fill="#8a8a8a" opacity="0.5"/><rect x="70" y="626.0" width="2" height="1" fill="#8a8a8a" opacity="0.5"/><rect x="70" y="635.0" width="2" height="1" fill="#8a8a8a" opacity="0.5"/><rect x="51" y="644.0" width="21" height="1" fill="#6c6c6c"/><rect x="70" y="653.0" width="2" height="1" fill="#8a8a8a" opacity="0.5"/><rect x="70" y="662.0" width="2" height="1" fill="#8a8a8a" opacity="0.5"/><rect x="70" y="671.0" width="2" height="1" fill="#8a8a8a" opacity="0.5"/><rect x="70" y="680.0" width="2" height="1" fill="#8a8a8a" opacity="0.5"/><rect x="51" y="689.0" width="21" height="1" fill="#6c6c6c"/><rect x="70" y="698.0" width="2" height="1" fill="#8a8a8a" opacity="0.5"/><rect x="70" y="707.0" width="2" height="1" fill="#8a8a8a" opacity="0.5"/><rect x="70" y="716.0" width="2" height="1" fill="#8a8a8a" opacity="0.5"/><rect x="70" y="725.0" width="2" height="1" fill="#8a8a8a" opacity="0.5"/><rect x="51" y="734.0" width="21" height="1" fill="#6c6c6c"/><rect x="70" y="743.0" width="2" height="1" fill="#8a8a8a" opacity="0.5"/><rect x="70" y="752.0" width="2" height="1" fill="#8a8a8a" opacity="0.5"/><rect x="70" y="761.0" width="2" height="1" fill="#8a8a8a" opacity="0.5"/><rect x="70" y="770.0" width="2" height="1" fill="#8a8a8a" opacity="0.5"/><rect x="51" y="779.0" width="21" height="1" fill="#6c6c6c"/><rect x="70" y="788.0" width="2" height="1" fill="#8a8a8a" opacity="0.5"/><rect x="70" y="797.0" width="2" height="1" fill="#8a8a8a" opacity="0.5"/><rect x="70" y="806.0" width="2" height="1" fill="#8a8a8a" opacity="0.5"/><rect x="70" y="815.0" width="2" height="1" fill="#8a8a8a" opacity="0.5"/><rect x="51" y="824.0" width="21" height="1" fill="#6c6c6c"/><rect x="70" y="833.0" width="2" height="1" fill="#8a8a8a" opacity="0.5"/><rect x="70" y="842.0" width="2" height="1" fill="#8a8a8a" opacity="0.5"/><rect x="70" y="851.0" width="2" height="1" fill="#8a8a8a" opacity="0.5"/><rect x="70" y="860.0" width="2" height="1" fill="#8a8a8a" opacity="0.5"/><rect x="51" y="869.0" width="21" height="1" fill="#6c6c6c"/><rect x="70" y="878.0" width="2" height="1" fill="#8a8a8a" opacity="0.5"/><rect x="70" y="887.0" width="2" height="1" fill="#8a8a8a" opacity="0.5"/><rect x="70" y="896.0" width="2" height="1" fill="#8a8a8a" opacity="0.5"/><rect x="70" y="905.0" width="2" height="1" fill="#8a8a8a" opacity="0.5"/><rect x="51" y="914.0" width="21" height="1" fill="#6c6c6c"/><rect x="70" y="923.0" width="2" height="1" fill="#8a8a8a" opacity="0.5"/><rect x="70" y="932.0" width="2" height="1" fill="#8a8a8a" opacity="0.5"/><rect x="70" y="941.0" width="2" height="1" fill="#8a8a8a" opacity="0.5"/><rect x="70" y="950.0" width="2" height="1" fill="#8a8a8a" opacity="0.5"/><rect x="51" y="959.0" width="21" height="1" fill="#6c6c6c"/><rect x="70" y="968.0" width="2" height="1" fill="#8a8a8a" opacity="0.5"/><rect x="70" y="977.0" width="2" height="1" fill="#8a8a8a" opacity="0.5"/><rect x="70" y="986.0" width="2" height="1" fill="#8a8a8a" opacity="0.5"/><rect x="70" y="995.0" width="2" height="1" fill="#8a8a8a" opacity="0.5"/><rect x="51" y="1004.0" width="21" height="1" fill="#6c6c6c"/><rect x="52" y="124.500" width="1" height="1" fill="#6e6e6e"/><rect x="65.500" y="111" width="1" height="1" fill="#6e6e6e"/><rect x="54" y="124.500" width="1" height="1" fill="#6e6e6e"/><rect x="65.500" y="113" width="1" height="1" fill="#6e6e6e"/><rect x="56" y="124.500" width="1" height="1" fill="#6e6e6e"/><rect x="65.500" y="115" width="1" height="1" fill="#6e6e6e"/><rect x="58" y="124.500" width="1" height="1" fill="#6e6e6e"/><rect x="65.500" y="117" width="1" height="1" fill="#6e6e6e"/><rect x="60" y="124.500" width="1" height="1" fill="#6e6e6e"/><rect x="65.500" y="119" width="1" height="1" fill="#6e6e6e"/><rect x="62" y="124.500" width="1" height="1" fill="#6e6e6e"/><rect x="65.500" y="121" width="1" height="1" fill="#6e6e6e"/><rect x="64" y="124.500" width="1" height="1" fill="#6e6e6e"/><rect x="65.500" y="123" width="1" height="1" fill="#6e6e6e"/><rect x="66" y="124.500" width="1" height="1" fill="#6e6e6e"/><rect x="65.500" y="125" width="1" height="1" fill="#6e6e6e"/><rect x="68" y="124.500" width="1" height="1" fill="#6e6e6e"/><rect x="65.500" y="127" width="1" height="1" fill="#6e6e6e"/><rect x="70" y="124.500" width="1" height="1" fill="#6e6e6e"/><rect x="65.500" y="129" width="1" height="1" fill="#6e6e6e"/><rect x="72" y="124.500" width="1" height="1" fill="#6e6e6e"/><rect x="65.500" y="131" width="1" height="1" fill="#6e6e6e"/><rect x="54" y="351.500" width="13" height="1.300" fill="#e8e8e8"/></svg>
<span class="t" style="left:58.00px;top:151.11px;font-size:10.5px;line-height:10.5px;color:#a8a8a8;">5</span>
<span class="t" style="left:58.00px;top:196.11px;font-size:10.5px;line-height:10.5px;color:#a8a8a8;">0</span>
<span class="t" style="left:58.00px;top:241.11px;font-size:10.5px;line-height:10.5px;color:#a8a8a8;">5</span>
<span class="t" style="left:58.00px;top:286.11px;font-size:10.5px;line-height:10.5px;color:#a8a8a8;">1</span>
<span class="t" style="left:58.00px;top:296.61px;font-size:10.5px;line-height:10.5px;color:#a8a8a8;">0</span>
<span class="t" style="left:58.00px;top:331.11px;font-size:10.5px;line-height:10.5px;color:#a8a8a8;">1</span>
<span class="t" style="left:58.00px;top:341.61px;font-size:10.5px;line-height:10.5px;color:#a8a8a8;">5</span>
<span class="t" style="left:58.00px;top:376.11px;font-size:10.5px;line-height:10.5px;color:#a8a8a8;">2</span>
<span class="t" style="left:58.00px;top:386.61px;font-size:10.5px;line-height:10.5px;color:#a8a8a8;">0</span>
<span class="t" style="left:58.00px;top:421.11px;font-size:10.5px;line-height:10.5px;color:#a8a8a8;">2</span>
<span class="t" style="left:58.00px;top:431.61px;font-size:10.5px;line-height:10.5px;color:#a8a8a8;">5</span>
<span class="t" style="left:58.00px;top:466.11px;font-size:10.5px;line-height:10.5px;color:#a8a8a8;">3</span>
<span class="t" style="left:58.00px;top:476.61px;font-size:10.5px;line-height:10.5px;color:#a8a8a8;">0</span>
<span class="t" style="left:58.00px;top:511.11px;font-size:10.5px;line-height:10.5px;color:#a8a8a8;">3</span>
<span class="t" style="left:58.00px;top:521.61px;font-size:10.5px;line-height:10.5px;color:#a8a8a8;">5</span>
<span class="t" style="left:58.00px;top:556.11px;font-size:10.5px;line-height:10.5px;color:#a8a8a8;">4</span>
<span class="t" style="left:58.00px;top:566.61px;font-size:10.5px;line-height:10.5px;color:#a8a8a8;">0</span>
<span class="t" style="left:58.00px;top:601.11px;font-size:10.5px;line-height:10.5px;color:#a8a8a8;">4</span>
<span class="t" style="left:58.00px;top:611.61px;font-size:10.5px;line-height:10.5px;color:#a8a8a8;">5</span>
<span class="t" style="left:58.00px;top:646.11px;font-size:10.5px;line-height:10.5px;color:#a8a8a8;">5</span>
<span class="t" style="left:58.00px;top:656.61px;font-size:10.5px;line-height:10.5px;color:#a8a8a8;">0</span>
<span class="t" style="left:58.00px;top:691.11px;font-size:10.5px;line-height:10.5px;color:#a8a8a8;">5</span>
<span class="t" style="left:58.00px;top:701.61px;font-size:10.5px;line-height:10.5px;color:#a8a8a8;">5</span>
<span class="t" style="left:58.00px;top:736.11px;font-size:10.5px;line-height:10.5px;color:#a8a8a8;">6</span>
<span class="t" style="left:58.00px;top:746.61px;font-size:10.5px;line-height:10.5px;color:#a8a8a8;">0</span>
<span class="t" style="left:58.00px;top:781.11px;font-size:10.5px;line-height:10.5px;color:#a8a8a8;">6</span>
<span class="t" style="left:58.00px;top:791.61px;font-size:10.5px;line-height:10.5px;color:#a8a8a8;">5</span>
<span class="t" style="left:58.00px;top:826.11px;font-size:10.5px;line-height:10.5px;color:#a8a8a8;">7</span>
<span class="t" style="left:58.00px;top:836.61px;font-size:10.5px;line-height:10.5px;color:#a8a8a8;">0</span>
<span class="t" style="left:58.00px;top:871.11px;font-size:10.5px;line-height:10.5px;color:#a8a8a8;">7</span>
<span class="t" style="left:58.00px;top:881.61px;font-size:10.5px;line-height:10.5px;color:#a8a8a8;">5</span>
<span class="t" style="left:58.00px;top:916.11px;font-size:10.5px;line-height:10.5px;color:#a8a8a8;">8</span>
<span class="t" style="left:58.00px;top:926.61px;font-size:10.5px;line-height:10.5px;color:#a8a8a8;">0</span>
<span class="t" style="left:58.00px;top:961.11px;font-size:10.5px;line-height:10.5px;color:#a8a8a8;">8</span>
<span class="t" style="left:58.00px;top:971.61px;font-size:10.5px;line-height:10.5px;color:#a8a8a8;">5</span>
<div class="b" style="left:72px;top:131px;width:1417px;height:877px;background:#282828;"></div>
<svg class="b" style="left:405px;top:195px" width="750" height="750" viewBox="405 195 750 750">
<defs>
<radialGradient id="bgG" gradientUnits="userSpaceOnUse" cx="782" cy="569" r="400">
<stop offset="0" stop-color="#f4f34e"/><stop offset="0.52" stop-color="#f4f352"/><stop offset="0.61" stop-color="#f4f366"/><stop offset="0.69" stop-color="#f5f592"/><stop offset="0.8" stop-color="#f6f8bc"/><stop offset="0.92" stop-color="#f6f9cb"/><stop offset="1" stop-color="#f6f9cf"/>
</radialGradient>
<linearGradient id="lpA" gradientUnits="userSpaceOnUse" x1="0" y1="-90" x2="0" y2="90">
<stop offset="0" stop-color="#24c038"/><stop offset="0.12" stop-color="#28d03e"/><stop offset="0.3" stop-color="#2de047"/><stop offset="0.52" stop-color="#36ea52"/><stop offset="0.68" stop-color="#2bdc44"/><stop offset="0.8" stop-color="#25c63a"/><stop offset="0.92" stop-color="#1fab30"/><stop offset="1" stop-color="#1a972a"/>
</linearGradient>
<radialGradient id="lpH" gradientUnits="userSpaceOnUse" cx="0" cy="0" r="1" gradientTransform="translate(295 6) scale(200 40)">
<stop offset="0" stop-color="#92fba8" stop-opacity="0.95"/><stop offset="0.35" stop-color="#78f792" stop-opacity="0.75"/><stop offset="0.7" stop-color="#52ee6e" stop-opacity="0.3"/><stop offset="1" stop-color="#3ee85a" stop-opacity="0"/>
</radialGradient>
<linearGradient id="lpB" gradientUnits="userSpaceOnUse" x1="55" y1="0" x2="487" y2="0">
<stop offset="0" stop-color="#05400e" stop-opacity="0.72"/><stop offset="0.1" stop-color="#074c10" stop-opacity="0.5"/><stop offset="0.25" stop-color="#0a5a14" stop-opacity="0.2"/><stop offset="0.4" stop-color="#0a5a14" stop-opacity="0.06"/><stop offset="0.5" stop-color="#0a5a14" stop-opacity="0"/><stop offset="1" stop-color="#0c7a1a" stop-opacity="0"/>
</linearGradient>
<radialGradient id="spA" gradientUnits="userSpaceOnUse" cx="0" cy="0" r="340">
<stop offset="0.28" stop-color="#083e0f"/><stop offset="0.39" stop-color="#0b5515"/><stop offset="0.455" stop-color="#0f6a1a"/><stop offset="0.51" stop-color="#158522"/><stop offset="0.565" stop-color="#1a9a28"/><stop offset="0.62" stop-color="#1fb030"/><stop offset="0.72" stop-color="#21bc33"/><stop offset="1" stop-color="#22c636"/>
</radialGradient>
<linearGradient id="spC" gradientUnits="userSpaceOnUse" x1="0" y1="-72" x2="0" y2="72">
<stop offset="0" stop-color="#0a6014" stop-opacity="0.3"/><stop offset="0.25" stop-color="#0a6014" stop-opacity="0"/><stop offset="0.75" stop-color="#0a6014" stop-opacity="0"/><stop offset="1" stop-color="#0a6014" stop-opacity="0.3"/>
</linearGradient>
<radialGradient id="ccG" gradientUnits="userSpaceOnUse" cx="785" cy="568" r="72">
<stop offset="0" stop-color="#faf4ac"/><stop offset="0.35" stop-color="#f8ee86"/><stop offset="0.7" stop-color="#f4e24a"/><stop offset="1" stop-color="#efd21a"/>
</radialGradient>
<linearGradient id="rimG" gradientUnits="userSpaceOnUse" x1="0" y1="0" x2="487" y2="0"><stop offset="0" stop-color="#127a20" stop-opacity="0.75"/><stop offset="0.5" stop-color="#127a20" stop-opacity="0.6"/><stop offset="0.78" stop-color="#16852a" stop-opacity="0.38"/><stop offset="0.93" stop-color="#16852a" stop-opacity="0.08"/><stop offset="1" stop-color="#16852a" stop-opacity="0"/></linearGradient>
<linearGradient id="bandG" gradientUnits="userSpaceOnUse" x1="0" y1="0" x2="487" y2="0"><stop offset="0" stop-color="#117520" stop-opacity="0.8"/><stop offset="0.35" stop-color="#127a20" stop-opacity="0.66"/><stop offset="0.55" stop-color="#127a20" stop-opacity="0.32"/><stop offset="0.7" stop-color="#16852a" stop-opacity="0.08"/><stop offset="0.8" stop-color="#16852a" stop-opacity="0"/></linearGradient>
<filter id="blur8" x="-20%" y="-20%" width="140%" height="140%"><feGaussianBlur stdDeviation="10"/></filter>
<filter id="blur4" x="-20%" y="-20%" width="140%" height="140%"><feGaussianBlur stdDeviation="5"/></filter>
<filter id="blur6" x="-10%" y="-30%" width="120%" height="160%"><feGaussianBlur stdDeviation="5"/></filter>
<path id="LP" d="M-27.0 -0.0L-8.6 -14.7L9.7 -26.2L28.1 -36.4L46.4 -45.5L64.8 -53.7L83.1 -61.0L101.5 -67.4L119.9 -72.9L138.2 -77.4L156.6 -81.1L174.9 -83.9L193.3 -85.8L211.6 -86.8L230.0 -87.0L248.4 -86.3L266.7 -84.8L285.1 -82.4L303.4 -79.1L321.8 -74.9L340.1 -69.9L358.5 -64.0L376.9 -57.4L395.2 -49.9L413.6 -41.7L431.9 -32.7L450.3 -23.0L468.6 -12.4L487.0 -0.0L468.6 12.4L450.3 23.0L431.9 32.7L413.6 41.7L395.2 49.9L376.9 57.4L358.5 64.0L340.1 69.9L321.8 74.9L303.4 79.1L285.1 82.4L266.7 84.8L248.4 86.3L230.0 87.0L211.6 86.8L193.3 85.8L174.9 83.9L156.6 81.1L138.2 77.4L119.9 72.9L101.5 67.4L83.1 61.0L64.8 53.7L46.4 45.5L28.1 36.4L9.7 26.2L-8.6 14.7Z"/>
<path id="SP" d="M-7.0 -0.0L5.1 -7.5L17.3 -14.9L29.4 -22.1L41.6 -29.1L53.7 -35.6L65.9 -41.8L78.0 -47.4L90.1 -52.4L102.3 -56.7L114.4 -60.4L126.6 -63.2L138.7 -65.3L150.9 -66.6L163.0 -67.0L175.1 -66.6L187.3 -65.5L199.4 -63.7L211.6 -61.1L223.7 -57.8L235.9 -53.8L248.0 -49.2L260.1 -43.9L272.3 -38.0L284.4 -31.5L296.6 -24.5L308.7 -17.0L320.9 -9.0L333.0 -0.0L320.9 9.0L308.7 17.0L296.6 24.5L284.4 31.5L272.3 38.0L260.1 43.9L248.0 49.2L235.9 53.8L223.7 57.8L211.6 61.1L199.4 63.7L187.3 65.5L175.1 66.6L163.0 67.0L150.9 66.6L138.7 65.3L126.6 63.2L114.4 60.4L102.3 56.7L90.1 52.4L78.0 47.4L65.9 41.8L53.7 35.6L41.6 29.1L29.4 22.1L17.3 14.9L5.1 7.5Z"/>
<path id="SPF" d="M-7.0 -0.0L5.4 -6.9L17.7 -13.8L30.1 -20.5L42.4 -27.0L54.8 -33.3L67.1 -39.2L79.5 -44.7L91.9 -49.8L104.2 -54.5L116.6 -58.5L128.9 -62.0L141.3 -64.9L153.6 -67.2L166.0 -68.8L178.4 -69.7L190.7 -70.0L203.1 -69.5L215.4 -68.3L227.8 -66.3L240.1 -63.4L252.5 -59.7L264.9 -55.1L277.2 -49.5L289.6 -43.0L301.9 -35.3L314.3 -26.3L326.6 -15.6L339.0 -0.0L326.6 15.6L314.3 26.3L301.9 35.3L289.6 43.0L277.2 49.5L264.9 55.1L252.5 59.7L240.1 63.4L227.8 66.3L215.4 68.3L203.1 69.5L190.7 70.0L178.4 69.7L166.0 68.8L153.6 67.2L141.3 64.9L128.9 62.0L116.6 58.5L104.2 54.5L91.9 49.8L79.5 44.7L67.1 39.2L54.8 33.3L42.4 27.0L30.1 20.5L17.7 13.8L5.4 6.9Z"/>
<clipPath id="lpClip"><use href="#LP"/></clipPath>
<clipPath id="lpClipY"><rect x="-30" y="6" width="530" height="100"/></clipPath>
<clipPath id="ccClip"><circle cx="782.1" cy="566.4" r="69.6"/></clipPath>
<clipPath id="spClipAll">
 <use href="#SP" transform="translate(778.5 568) rotate(-90)"/>
 <use href="#SPF" transform="translate(778.5 567.5) rotate(90) scale(1 1.03)"/>
 <use href="#SPF" transform="translate(779 566.5) rotate(0)"/>
 <use href="#SPF" transform="translate(779 564) rotate(180)"/>
</clipPath>
</defs>
<rect x="405" y="195" width="750" height="750" fill="#f6f9cf"/>
<rect x="405" y="195" width="750" height="750" fill="url(#bgG)"/>
<g transform="translate(778.5 568) rotate(-90) scale(1.0000 1.0000)"><use href="#SP" fill="url(#spA)"/><use href="#SP" fill="url(#spC)"/></g>
<g transform="translate(778.5 567.5) rotate(90) scale(1.0000 1.0300)"><use href="#SPF" fill="url(#spA)"/><use href="#SPF" fill="url(#spC)"/></g>
<g transform="translate(779 566.5) rotate(0) scale(1.0000 1.0000)"><use href="#SPF" fill="url(#spA)"/><use href="#SPF" fill="url(#spC)"/></g>
<g transform="translate(779 564) rotate(180) scale(1.0000 1.0000)"><use href="#SPF" fill="url(#spA)"/><use href="#SPF" fill="url(#spC)"/></g>
<g clip-path="url(#spClipAll)"><g filter="url(#blur8)" opacity="0.8">
<use href="#LP" fill="#042c0a" transform="translate(783.5 572) rotate(-135.5)"/>
<use href="#LP" fill="#042c0a" transform="translate(783.5 572) rotate(-44.6)"/>
<use href="#LP" fill="#042c0a" transform="translate(783.5 572) rotate(44.65)"/>
<use href="#LP" fill="#042c0a" transform="translate(783.5 572) rotate(135.45)"/>
</g></g>
<line x1="779.5" y1="279" x2="779.5" y2="500" stroke="#0a5414" stroke-width="1.1" opacity="0.85"/>
<circle cx="779.5" cy="273.5" r="2.2" fill="#07360c"/>
<line x1="757" y1="376.3" x2="757" y2="480" stroke="#0a5414" stroke-width="0.8" opacity="0.85"/>
<circle cx="757" cy="370.8" r="1.5" fill="#07360c"/>
<line x1="800.7" y1="375.9" x2="800.7" y2="480" stroke="#0a5414" stroke-width="0.8" opacity="0.85"/>
<circle cx="800.7" cy="370.4" r="1.5" fill="#07360c"/>
<line x1="779.3" y1="843.5" x2="779.3" y2="640" stroke="#0a5414" stroke-width="1.1" opacity="0.85"/>
<circle cx="779.3" cy="849" r="2.2" fill="#07360c"/>
<line x1="758.4" y1="747.2" x2="758.4" y2="650" stroke="#0a5414" stroke-width="0.8" opacity="0.85"/>
<circle cx="758.4" cy="752.7" r="1.5" fill="#07360c"/>
<line x1="801.2" y1="746.1" x2="801.2" y2="650" stroke="#0a5414" stroke-width="0.8" opacity="0.85"/>
<circle cx="801.2" cy="751.6" r="1.5" fill="#07360c"/>
<line x1="502.2" y1="565" x2="715" y2="565" stroke="#0a5414" stroke-width="1.1" opacity="0.85"/>
<circle cx="496.7" cy="565" r="2.2" fill="#07360c"/>
<line x1="600" y1="584.8" x2="700" y2="584.8" stroke="#0a5414" stroke-width="0.8" opacity="0.85"/>
<circle cx="594.5" cy="584.8" r="1.5" fill="#07360c"/>
<line x1="600" y1="541.5" x2="700" y2="541.5" stroke="#0a5414" stroke-width="0.8" opacity="0.85"/>
<circle cx="594.5" cy="541.5" r="1.5" fill="#07360c"/>
<line x1="1067.9" y1="564.8" x2="850" y2="564.8" stroke="#0a5414" stroke-width="1.1" opacity="0.85"/>
<circle cx="1073.4" cy="564.8" r="2.2" fill="#07360c"/>
<line x1="969.9" y1="585.5" x2="870" y2="585.5" stroke="#0a5414" stroke-width="0.8" opacity="0.85"/>
<circle cx="975.4" cy="585.5" r="1.5" fill="#07360c"/>
<line x1="969.7" y1="541.9" x2="870" y2="541.9" stroke="#0a5414" stroke-width="0.8" opacity="0.85"/>
<circle cx="975.2" cy="541.9" r="1.5" fill="#07360c"/>
<g transform="translate(783.5 572) rotate(-135.5) scale(1 1)">
<use href="#LP" fill="url(#lpA)"/>
<g clip-path="url(#lpClip)">
<rect x="-30" y="-110" width="530" height="220" fill="url(#lpH)"/>
<use href="#LP" fill="none" stroke="url(#rimG)" stroke-width="12" filter="url(#blur6)" opacity="0.8"/>
<use href="#LP" fill="none" stroke="url(#bandG)" stroke-width="30" filter="url(#blur8)" opacity="0.6"/>
<rect x="-30" y="-110" width="530" height="220" fill="url(#lpB)"/></g>
</g><g transform="translate(783.5 572) rotate(-135) scale(1 1)">
<line x1="347.2" y1="-0.7" x2="60" y2="-0.7" stroke="#0b5a16" stroke-width="1.4" opacity="0.85"/>
<circle cx="355.7" cy="-0.7" r="2.7" fill="#07380d"/>
<line x1="216" y1="30.5" x2="60" y2="30.5" stroke="#0b5a16" stroke-width="1.1" opacity="0.85"/>
<circle cx="221" cy="30.5" r="1.7" fill="#07380d"/>
<line x1="216" y1="-29.8" x2="60" y2="-29.8" stroke="#0b5a16" stroke-width="1.1" opacity="0.85"/>
<circle cx="221" cy="-29.8" r="1.7" fill="#07380d"/>
</g>
<g transform="translate(783.5 572) rotate(-44.6) scale(1 -1.03)">
<use href="#LP" fill="url(#lpA)"/>
<g clip-path="url(#lpClip)">
<rect x="-30" y="-110" width="530" height="220" fill="url(#lpH)"/>
<use href="#LP" fill="none" stroke="url(#rimG)" stroke-width="12" filter="url(#blur6)" opacity="0.8"/>
<use href="#LP" fill="none" stroke="url(#bandG)" stroke-width="30" filter="url(#blur8)" opacity="0.6"/>
<rect x="-30" y="-110" width="530" height="220" fill="url(#lpB)"/></g>
</g><g transform="translate(783.5 572) rotate(-45) scale(1 -1)">
<line x1="348.7" y1="-0.9" x2="60" y2="-0.9" stroke="#0b5a16" stroke-width="1.4" opacity="0.85"/>
<circle cx="357.2" cy="-0.9" r="2.7" fill="#07380d"/>
<line x1="215.5" y1="33.9" x2="60" y2="33.9" stroke="#0b5a16" stroke-width="1.1" opacity="0.85"/>
<circle cx="220.5" cy="33.9" r="1.7" fill="#07380d"/>
<line x1="215.5" y1="-27.4" x2="60" y2="-27.4" stroke="#0b5a16" stroke-width="1.1" opacity="0.85"/>
<circle cx="220.5" cy="-27.4" r="1.7" fill="#07380d"/>
</g>
<g transform="translate(783.5 572) rotate(44.65) scale(1 -1.03)">
<use href="#LP" fill="url(#lpA)"/>
<g clip-path="url(#lpClip)">
<rect x="-30" y="-110" width="530" height="220" fill="url(#lpH)"/>
<use href="#LP" fill="none" stroke="url(#rimG)" stroke-width="12" filter="url(#blur6)" opacity="0.8"/>
<use href="#LP" fill="none" stroke="url(#bandG)" stroke-width="30" filter="url(#blur8)" opacity="0.6"/>
<rect x="-30" y="-110" width="530" height="220" fill="url(#lpB)"/></g>
</g><g transform="translate(783.5 572) rotate(45) scale(1 -1)">
<line x1="345.3" y1="1.7" x2="60" y2="1.7" stroke="#0b5a16" stroke-width="1.4" opacity="0.85"/>
<circle cx="353.8" cy="1.7" r="2.7" fill="#07380d"/>
<line x1="209" y1="34.8" x2="60" y2="34.8" stroke="#0b5a16" stroke-width="1.1" opacity="0.85"/>
<circle cx="214" cy="34.8" r="1.7" fill="#07380d"/>
<line x1="209" y1="-27.8" x2="60" y2="-27.8" stroke="#0b5a16" stroke-width="1.1" opacity="0.85"/>
<circle cx="214" cy="-27.8" r="1.7" fill="#07380d"/>
</g>
<g transform="translate(783.5 572) rotate(135.45) scale(1 1)">
<use href="#LP" fill="url(#lpA)"/>
<g clip-path="url(#lpClip)">
<rect x="-30" y="-110" width="530" height="220" fill="url(#lpH)"/>
<use href="#LP" fill="none" stroke="url(#rimG)" stroke-width="12" filter="url(#blur6)" opacity="0.8"/>
<use href="#LP" fill="none" stroke="url(#bandG)" stroke-width="30" filter="url(#blur8)" opacity="0.6"/>
<rect x="-30" y="-110" width="530" height="220" fill="url(#lpB)"/></g>
</g><g transform="translate(783.5 572) rotate(135) scale(1 1)">
<line x1="347" y1="5.4" x2="60" y2="5.4" stroke="#0b5a16" stroke-width="1.4" opacity="0.85"/>
<circle cx="355.5" cy="5.4" r="2.7" fill="#07380d"/>
<line x1="212" y1="36.4" x2="60" y2="36.4" stroke="#0b5a16" stroke-width="1.1" opacity="0.85"/>
<circle cx="217" cy="36.4" r="1.7" fill="#07380d"/>
<line x1="212" y1="-25.4" x2="60" y2="-25.4" stroke="#0b5a16" stroke-width="1.1" opacity="0.85"/>
<circle cx="217" cy="-25.4" r="1.7" fill="#07380d"/>
</g>
<circle cx="782.1" cy="566.4" r="79" fill="#063a0d" opacity="0.7" filter="url(#blur4)"/>
<circle cx="782.1" cy="566.4" r="69.6" fill="url(#ccG)"/>
<g clip-path="url(#ccClip)" stroke="#cdbb24" stroke-width="1.3" opacity="0.8">
<line x1="712.3" y1="480" x2="532.3" y2="660"/>
<line x1="537.7" y1="480" x2="717.7" y2="660"/>
<line x1="733.5" y1="480" x2="553.5" y2="660"/>
<line x1="558.9" y1="480" x2="738.9" y2="660"/>
<line x1="754.7" y1="480" x2="574.7" y2="660"/>
<line x1="580.1" y1="480" x2="760.1" y2="660"/>
<line x1="775.9" y1="480" x2="595.9" y2="660"/>
<line x1="601.3" y1="480" x2="781.3" y2="660"/>
<line x1="797.1" y1="480" x2="617.1" y2="660"/>
<line x1="622.5" y1="480" x2="802.5" y2="660"/>
<line x1="818.3" y1="480" x2="638.3" y2="660"/>
<line x1="643.7" y1="480" x2="823.7" y2="660"/>
<line x1="839.5" y1="480" x2="659.5" y2="660"/>
<line x1="664.9" y1="480" x2="844.9" y2="660"/>
<line x1="860.7" y1="480" x2="680.7" y2="660" stroke-width="2.1" stroke="#c4b020"/>
<line x1="686.1" y1="480" x2="866.1" y2="660" stroke-width="2.1" stroke="#c4b020"/>
<line x1="881.9" y1="480" x2="701.9" y2="660"/>
<line x1="707.3" y1="480" x2="887.3" y2="660"/>
<line x1="903.1" y1="480" x2="723.1" y2="660"/>
<line x1="728.5" y1="480" x2="908.5" y2="660"/>
<line x1="924.3" y1="480" x2="744.3" y2="660"/>
<line x1="749.7" y1="480" x2="929.7" y2="660"/>
<line x1="945.5" y1="480" x2="765.5" y2="660"/>
<line x1="770.9" y1="480" x2="950.9" y2="660"/>
<line x1="966.7" y1="480" x2="786.7" y2="660"/>
<line x1="792.1" y1="480" x2="972.1" y2="660"/>
<line x1="987.9" y1="480" x2="807.9" y2="660"/>
<line x1="813.3" y1="480" x2="993.3" y2="660"/>
<line x1="1009.1" y1="480" x2="829.1" y2="660"/>
<line x1="834.5" y1="480" x2="1014.5" y2="660"/>
</g>
</svg>
<div class="b" style="left:1489px;top:110px;width:20px;height:898px;background:#4d4d4d;"></div>
<div class="b" style="left:1492px;top:393px;width:14px;height:332px;background:#6b6b6b;border-radius:1px"></div>
<svg class="b" style="left:1496px;top:119px;" width="9" height="6" viewBox="0 0 9 6"><path d="M0.5 5L4.5 1L8.5 5" stroke="#8c8c8c" stroke-width="1.2" fill="none"/></svg>
<svg class="b" style="left:1496px;top:993px;" width="9" height="6" viewBox="0 0 9 6"><path d="M0.5 1L4.5 5L8.5 1" stroke="#8c8c8c" stroke-width="1.2" fill="none"/></svg>
<div class="b" style="left:1509px;top:74.5px;width:3px;height:955.5px;background:#4a4a4a;"></div>
<div class="b" style="left:1509.5px;top:74.5px;width:1.7px;height:955.5px;background:#373737;"></div>
<div class="b" style="left:51px;top:1008px;width:1458px;height:22px;background:#4d4d4d;"></div>
<div class="b" style="left:51px;top:1008px;width:60px;height:22px;background:#484848;"></div>
<div class="b" style="left:111px;top:1008px;width:230px;height:22px;background:#535353;"></div>
<div class="b" style="left:110.5px;top:1008px;width:1px;height:22px;background:#444;"></div>
<span class="t" style="left:62.50px;top:1011.00px;font-size:13px;line-height:13px;color:#f0f0f0;transform:scaleX(0.9766);">12.5%</span>
<span class="t" style="left:141.00px;top:1012.84px;font-size:12px;line-height:12px;color:#c8c8c8;transform:scaleX(0.9843);">83.333 in x 83.333 in (72 ppi)</span>
<svg class="b" style="left:327px;top:1013px;" width="6" height="11" viewBox="0 0 6 11"><path d="M1 0.5L4.5 5.5L1 10.5" stroke="#c8c8c8" stroke-width="1.1" fill="none"/></svg>
<svg class="b" style="left:351px;top:1014px;" width="6" height="9" viewBox="0 0 6 9"><path d="M5 0.5L1 4.5L5 8.5" stroke="#8c8c8c" stroke-width="1.2" fill="none"/></svg>
<svg class="b" style="left:1474px;top:1015px;" width="6" height="9" viewBox="0 0 6 9"><path d="M1 0.5L5 4.5L1 8.5" stroke="#8c8c8c" stroke-width="1.2" fill="none"/></svg>
<div class="b" style="left:680px;top:1011px;width:470px;height:14px;background:#6b6b6b;border-radius:1px"></div>
<div class="b" style="left:1512px;top:74.5px;width:46.5px;height:955.5px;background:#535353;"></div>
<div class="b" style="left:1512px;top:74.5px;width:46.5px;height:13.5px;background:#424242;"></div>
<div class="b" style="left:1512px;top:88px;width:46.5px;height:1px;background:#3c3c3c;"></div>
<div class="b" style="left:1512px;top:208.5px;width:46.5px;height:1.5px;background:#3c3c3c;"></div>
<div class="b" style="left:1512px;top:295px;width:46.5px;height:1.5px;background:#3c3c3c;"></div>
<div class="b" style="left:1558.5px;top:74.5px;width:3.5px;height:955.5px;background:#474747;"></div>
<div class="b" style="left:1558.8px;top:74.5px;width:1.8px;height:955.5px;background:#363636;"></div>
<svg class="b" style="left:0;top:0" width="1920" height="1057" viewBox="0 0 1920 1057"><path d="M1547.5 78.200L1545 80.800L1547.500 83.400M1551.500 78.200L1549 80.800L1551.500 83.400" stroke="#e0e0e0" stroke-width="1.200" fill="none"/><rect x="1523" y="94" width="1" height="4.500" fill="#404040"/><rect x="1525" y="94" width="1" height="4.500" fill="#404040"/><rect x="1527" y="94" width="1" height="4.500" fill="#404040"/><rect x="1529" y="94" width="1" height="4.500" fill="#404040"/><rect x="1531" y="94" width="1" height="4.500" fill="#404040"/><rect x="1533" y="94" width="1" height="4.500" fill="#404040"/><rect x="1535" y="94" width="1" height="4.500" fill="#404040"/><rect x="1537" y="94" width="1" height="4.500" fill="#404040"/><rect x="1539" y="94" width="1" height="4.500" fill="#404040"/><rect x="1541" y="94" width="1" height="4.500" fill="#404040"/><rect x="1543" y="94" width="1" height="4.500" fill="#404040"/><rect x="1545" y="94" width="1" height="4.500" fill="#404040"/><rect x="1523" y="215.5" width="1" height="4.500" fill="#404040"/><rect x="1525" y="215.5" width="1" height="4.500" fill="#404040"/><rect x="1527" y="215.5" width="1" height="4.500" fill="#404040"/><rect x="1529" y="215.5" width="1" height="4.500" fill="#404040"/><rect x="1531" y="215.5" width="1" height="4.500" fill="#404040"/><rect x="1533" y="215.5" width="1" height="4.500" fill="#404040"/><rect x="1535" y="215.5" width="1" height="4.500" fill="#404040"/><rect x="1537" y="215.5" width="1" height="4.500" fill="#404040"/><rect x="1539" y="215.5" width="1" height="4.500" fill="#404040"/><rect x="1541" y="215.5" width="1" height="4.500" fill="#404040"/><rect x="1543" y="215.5" width="1" height="4.500" fill="#404040"/><rect x="1545" y="215.5" width="1" height="4.500" fill="#404040"/><rect x="1526.500" y="107.5" width="5" height="5" fill="none" stroke="#dadada" stroke-width="1.200"/><rect x="1526.500" y="114.5" width="5" height="5" fill="none" stroke="#dadada" stroke-width="1.200"/><rect x="1526" y="121.500" width="6" height="6" fill="#dadada"/><path d="M1536.500 125.500q8 -4.500 3.500 -13" stroke="#dadada" stroke-width="2.300" fill="none"/><path d="M1534.800 113.800l7.200 -5.300l1.200 8z" fill="#dadada"/><path d="M1527 144.500l17.500 8.500l-17.500 8.500z" fill="#dadada"/><path d="M1527 178.500h16q2.500 0 2.500 2.500v8q0 2.500 -2.500 2.500h-9l-4.500 5v-5h-2.500q-2.500 0 -2.500 -2.500v-8q0 -2.500 2.500 -2.500z" fill="#dadada"/><path d="M1526 245.500l6.200 -15.500h1.600l6.200 15.500h-1.900l-1.700 -4.500h-6.800l-1.700 4.500z M1530.200 239.500h5.600l-2.800 -7.300z" fill="#dadada" fill-rule="evenodd"/><rect x="1542.600" y="228.500" width="1.200" height="19.500" fill="#dadada"/><path d="M1533.200 264.300h9.800v1.900h-1.500v17.800h-1.800v-17.800h-1.700v17.800h-1.800v-8.700h-3q-5.600 0 -5.600 -5.500t5.600 -5.500z" fill="#dadada"/></svg>
<div class="b" style="left:1562px;top:74.5px;width:356px;height:13.5px;background:#424242;"></div><div class="b" style="left:1562px;top:88px;width:356px;height:1.5px;background:#3a3a3a;"></div><svg class="b" style="left:0;top:0" width="1920" height="1057" viewBox="0 0 1920 1057"><path d="M1904 78.200L1906.600 80.800L1904 83.400M1908 78.200L1910.600 80.800L1908 83.400" stroke="#e0e0e0" stroke-width="1.200" fill="none"/></svg><div class="b" style="left:1562px;top:89.5px;width:356px;height:33.5px;background:#424242;"></div><div class="b" style="left:1562px;top:123px;width:356px;height:1px;background:#3a3a3a;"></div><div class="b" style="left:1562px;top:89.5px;width:53.5px;height:34.5px;background:#535353;"></div><div class="b" style="left:1615.5px;top:89.5px;width:1px;height:33.5px;background:#3a3a3a;"></div><div class="b" style="left:1690px;top:89.5px;width:1px;height:33.5px;background:#3a3a3a;"></div><div class="b" style="left:1769px;top:89.5px;width:1px;height:33.5px;background:#3a3a3a;"></div><div class="b" style="left:1840px;top:89.5px;width:1px;height:33.5px;background:#3a3a3a;"></div><span class="t" style="left:1573.50px;top:97.80px;font-size:13px;line-height:13px;color:#f4f4f4;font-weight:bold;transform:scaleX(0.9281);">Color</span><span class="t" style="left:1626.00px;top:97.80px;font-size:13px;line-height:13px;color:#b4b4b4;font-weight:bold;transform:scaleX(0.9004);">Swatches</span><span class="t" style="left:1702.00px;top:97.80px;font-size:13px;line-height:13px;color:#b4b4b4;font-weight:bold;transform:scaleX(0.9393);">Gradients</span><span class="t" style="left:1781.00px;top:97.80px;font-size:13px;line-height:13px;color:#b4b4b4;font-weight:bold;transform:scaleX(0.9419);">Patterns</span><svg class="b" style="left:0;top:0" width="1920" height="1057" viewBox="0 0 1920 1057"><rect x="1903" y="101.8" width="10.500" height="1.100" fill="#d0d0d0"/><rect x="1903" y="104.1" width="10.500" height="1.100" fill="#d0d0d0"/><rect x="1903" y="106.4" width="10.500" height="1.100" fill="#d0d0d0"/><rect x="1903" y="108.7" width="10.500" height="1.100" fill="#d0d0d0"/></svg><div class="b" style="left:1562px;top:124px;width:356px;height:130px;background:#535353;"></div><div class="b" style="left:1618px;top:132px;width:236px;height:95px;background:linear-gradient(to bottom,rgba(0,0,0,0) 0%,rgba(0,0,0,0.5) 50%,#000 100%),linear-gradient(to right,#fff 0%,#0a84ff 100%);"></div><div class="b" style="left:1875px;top:132px;width:24.5px;height:95px;background:linear-gradient(to bottom,#ff0000 0%,#ff00ff 17%,#0000ff 33%,#00ffff 50%,#00ff00 67%,#ffff00 83%,#ff0000 100%);"></div><svg class="b" style="left:0;top:0" width="1920" height="1057" viewBox="0 0 1920 1057"><clipPath id="cfc"><rect x="1618" y="132" width="236" height="95"/></clipPath><circle cx="1717" cy="135" r="6.300" fill="none" stroke="#16244a" stroke-width="1.100" clip-path="url(#cfc)"/><path d="M1863.500 166.500h3.500l4.500 5l-4.500 5h-3.500q-1 0 -1 -1v-8q0 -1 1 -1z" fill="#e6e6e6"/><rect x="1587.500" y="150.500" width="21.500" height="21.500" fill="#ffffff" stroke="#3a3a3a" stroke-width="0.800"/><rect x="1573" y="136" width="26" height="25.500" fill="none" stroke="#8e8e8e" stroke-width="2"/><rect x="1575" y="138" width="22" height="21.500" fill="#8dc6fb" stroke="#2a2a2a" stroke-width="1"/><rect x="1576" y="139" width="20" height="19.500" fill="none" stroke="#f4f4f4" stroke-width="0.900"/><path d="M1579.500 194l7.500 14.500h-15z" fill="#d6d6d6"/><rect x="1578.800" y="199" width="1.500" height="5.200" fill="#444"/><rect x="1578.800" y="205.200" width="1.500" height="1.600" fill="#444"/><rect x="1592.500" y="195.500" width="15.500" height="15.500" fill="#8fc3ef" stroke="#f0f0f0" stroke-width="1.100"/></svg><div class="b" style="left:1562px;top:254px;width:356px;height:4px;background:#383838;"></div><div class="b" style="left:1562px;top:258px;width:356px;height:34.5px;background:#424242;"></div><div class="b" style="left:1562px;top:292.5px;width:356px;height:1px;background:#3a3a3a;"></div><div class="b" style="left:1562px;top:258px;width:83px;height:35.5px;background:#535353;"></div><div class="b" style="left:1645px;top:258px;width:1px;height:34.5px;background:#3a3a3a;"></div><div class="b" style="left:1740px;top:258px;width:1px;height:34.5px;background:#3a3a3a;"></div><div class="b" style="left:1811.5px;top:258px;width:1px;height:34.5px;background:#3a3a3a;"></div><span class="t" style="left:1573.50px;top:267.10px;font-size:13px;line-height:13px;color:#f4f4f4;font-weight:bold;transform:scaleX(0.9486);">Properties</span><span class="t" style="left:1656.00px;top:267.10px;font-size:13px;line-height:13px;color:#b4b4b4;font-weight:bold;transform:scaleX(0.9399);">Adjustments</span><span class="t" style="left:1752.50px;top:267.10px;font-size:13px;line-height:13px;color:#b4b4b4;font-weight:bold;transform:scaleX(0.9196);">Libraries</span><svg class="b" style="left:0;top:0" width="1920" height="1057" viewBox="0 0 1920 1057"><rect x="1903" y="270.3" width="10.500" height="1.100" fill="#d0d0d0"/><rect x="1903" y="272.6" width="10.500" height="1.100" fill="#d0d0d0"/><rect x="1903" y="274.9" width="10.500" height="1.100" fill="#d0d0d0"/><rect x="1903" y="277.2" width="10.500" height="1.100" fill="#d0d0d0"/></svg><div class="b" style="left:1562px;top:293.5px;width:356px;height:270.5px;background:#535353;"></div><div class="b" style="left:1576px;top:301px;width:27px;height:27px;background:#383838;border-radius:2px"></div><div class="b" style="left:1562px;top:333.5px;width:356px;height:1.5px;background:#444444;"></div><span class="t" style="left:1611.00px;top:308.80px;font-size:13px;line-height:13px;color:#d8d8d8;transform:scaleX(0.9620);">Document</span><span class="t" style="left:1591.00px;top:346.50px;font-size:13px;line-height:13px;color:#f2f2f2;font-weight:bold;transform:scaleX(0.9297);">Canvas</span><div class="b" style="left:1899.5px;top:337px;width:18.5px;height:194.5px;background:#4b4b4b;"></div><div class="b" style="left:1902px;top:357px;width:14.5px;height:52.5px;background:#6b6b6b;border-radius:1px"></div><span class="t" style="left:1628.00px;top:377.00px;font-size:13px;line-height:13px;color:#d8d8d8;transform:scaleX(0.9373);">W</span><span class="t" style="left:1631.00px;top:408.00px;font-size:13px;line-height:13px;color:#d8d8d8;transform:scaleX(0.8521);">H</span><span class="t" style="left:1731.00px;top:377.00px;font-size:13px;line-height:13px;color:#d8d8d8;transform:scaleX(0.8649);">X</span><span class="t" style="left:1731.00px;top:408.50px;font-size:13px;line-height:13px;color:#d8d8d8;transform:scaleX(0.8649);">Y</span><div class="b" style="left:1645px;top:373px;width:65px;height:20.5px;background:#3e3e3e;border:1px solid #676767;box-sizing:border-box"></div><span class="t" style="left:1651.00px;top:377.00px;font-size:13px;line-height:13px;color:#ececec;transform:scaleX(0.9619);">83.33 in</span><div class="b" style="left:1747px;top:373px;width:65px;height:20.5px;background:#4e4e4e;border:1px solid #5f5f5f;box-sizing:border-box"></div><span class="t" style="left:1753.00px;top:377.00px;font-size:13px;line-height:13px;color:#707070;transform:scaleX(0.9064);">0 in</span><div class="b" style="left:1645px;top:404px;width:65px;height:20.5px;background:#3e3e3e;border:1px solid #676767;box-sizing:border-box"></div><span class="t" style="left:1651.00px;top:408.00px;font-size:13px;line-height:13px;color:#ececec;transform:scaleX(0.9619);">83.33 in</span><div class="b" style="left:1747px;top:404px;width:65px;height:20.5px;background:#4e4e4e;border:1px solid #5f5f5f;box-sizing:border-box"></div><span class="t" style="left:1753.00px;top:408.00px;font-size:13px;line-height:13px;color:#707070;transform:scaleX(0.9064);">0 in</span><div class="b" style="left:1648px;top:441px;width:29px;height:29px;background:#383838;border-radius:2px"></div><span class="t" style="left:1648.00px;top:486.00px;font-size:13px;line-height:13px;color:#dadada;transform:scaleX(0.9768);">Resolution: 72 pixels/inch</span><span class="t" style="left:1608.00px;top:517.00px;font-size:13px;line-height:13px;color:#dadada;transform:scaleX(0.9071);">Mode</span><svg class="b" style="left:0;top:0" width="1920" height="1057" viewBox="0 0 1920 1057"><path d="M1582.500 306.500h9l5.500 5.500v10.500h-14.500z" fill="none" stroke="#e6e6e6" stroke-width="1.400"/><path d="M1591.500 306.500v5.500h5.500" fill="none" stroke="#e6e6e6" stroke-width="1.200"/><path d="M1571 350.500l5 5l5 -5" stroke="#d0d0d0" stroke-width="1.200" fill="none"/><g fill="none" stroke="#dcdcdc" stroke-width="1.600" stroke-linecap="round"><path d="M1586.600 398.600v-3a3.800 3.800 0 0 1 7.600 0v1.400"/><path d="M1594.200 401.200v3a3.800 3.800 0 0 1 -7.600 0v-1.400"/><path d="M1590.400 396v7.800"/></g><rect x="1654.500" y="445.500" width="17" height="20" fill="none" stroke="#e6e6e6" stroke-width="1.300"/><circle cx="1663" cy="451.500" r="2.300" fill="#e0e0e0"/><path d="M1658.200 465.500v-7.500q0 -3 3 -3h3.600q3 0 3 3v7.500z" fill="#e0e0e0"/><rect x="1685.500" y="448.500" width="19.500" height="14" fill="none" stroke="#e6e6e6" stroke-width="1.300"/><circle cx="1695.300" cy="453" r="2.200" fill="#e0e0e0"/><path d="M1690.500 462.500v-3q0 -2.500 2.500 -2.500h4.500q2.500 0 2.500 2.500v3z" fill="#e0e0e0"/><path d="M1904 352l4.200 -4.200l4.200 4.200" stroke="#8e8e8e" stroke-width="1.200" fill="none"/><path d="M1904 518l4.200 4.200l4.200 -4.200" stroke="#8e8e8e" stroke-width="1.200" fill="none"/></svg><div class="b" style="left:1562px;top:564px;width:356px;height:4px;background:#383838;"></div><div class="b" style="left:1562px;top:568px;width:356px;height:34px;background:#424242;"></div><div class="b" style="left:1562px;top:602px;width:356px;height:1px;background:#3a3a3a;"></div><div class="b" style="left:1562px;top:568px;width:59px;height:35px;background:#535353;"></div><div class="b" style="left:1621px;top:568px;width:1px;height:34px;background:#3a3a3a;"></div><div class="b" style="left:1695px;top:568px;width:1px;height:34px;background:#3a3a3a;"></div><div class="b" style="left:1750px;top:568px;width:1px;height:34px;background:#3a3a3a;"></div><span class="t" style="left:1573.50px;top:576.40px;font-size:13px;line-height:13px;color:#f4f4f4;font-weight:bold;transform:scaleX(0.8826);">Layers</span><span class="t" style="left:1632.00px;top:576.40px;font-size:13px;line-height:13px;color:#b4b4b4;font-weight:bold;transform:scaleX(0.9057);">Channels</span><span class="t" style="left:1707.50px;top:576.40px;font-size:13px;line-height:13px;color:#b4b4b4;font-weight:bold;transform:scaleX(0.9038);">Paths</span><svg class="b" style="left:0;top:0" width="1920" height="1057" viewBox="0 0 1920 1057"><rect x="1903" y="580.3" width="10.500" height="1.100" fill="#d0d0d0"/><rect x="1903" y="582.6" width="10.500" height="1.100" fill="#d0d0d0"/><rect x="1903" y="584.9" width="10.500" height="1.100" fill="#d0d0d0"/><rect x="1903" y="587.2" width="10.500" height="1.100" fill="#d0d0d0"/></svg><div class="b" style="left:1562px;top:603px;width:356px;height:427px;background:#535353;"></div><div class="b" style="left:1567px;top:615px;width:107px;height:22px;background:#424242;border:1px solid #5c5c5c;box-sizing:border-box;border-radius:2px"></div><span class="t" style="left:1594.00px;top:620.00px;font-size:13px;line-height:13px;color:#e8e8e8;transform:scaleX(0.9031);">Kind</span><div class="b" style="left:1562px;top:640.5px;width:356px;height:1.2px;background:#404040;"></div><div class="b" style="left:1567px;top:650px;width:159.5px;height:21px;background:#4f4f4f;border:1px solid #5e5e5e;box-sizing:border-box;border-radius:2px"></div><span class="t" style="left:1577.00px;top:654.00px;font-size:13px;line-height:13px;color:#8e8e8e;transform:scaleX(0.9308);">Normal</span><span class="t" style="left:1736.00px;top:655.00px;font-size:13px;line-height:13px;color:#8e8e8e;transform:scaleX(0.9542);">Opacity:</span><div class="b" style="left:1562px;top:675.5px;width:356px;height:1.2px;background:#404040;"></div><div class="b" style="left:1788px;top:651px;width:42.5px;height:19.5px;background:#484848;border:1px solid #5a5a5a;box-sizing:border-box"></div><div class="b" style="left:1831.5px;top:651px;width:17px;height:19.5px;background:#4f4f4f;border:1px solid #5a5a5a;box-sizing:border-box"></div><span class="t" style="left:1792.50px;top:654.00px;font-size:13px;line-height:13px;color:#757575;transform:scaleX(0.9774);">100%</span><div class="b" style="left:1788px;top:686px;width:42.5px;height:19.5px;background:#484848;border:1px solid #5a5a5a;box-sizing:border-box"></div><div class="b" style="left:1831.5px;top:686px;width:17px;height:19.5px;background:#4f4f4f;border:1px solid #5a5a5a;box-sizing:border-box"></div><span class="t" style="left:1792.50px;top:689.00px;font-size:13px;line-height:13px;color:#757575;transform:scaleX(0.9774);">100%</span><span class="t" style="left:1570.00px;top:689.00px;font-size:13px;line-height:13px;color:#8e8e8e;transform:scaleX(0.9333);">Lock:</span><span class="t" style="left:1763.00px;top:689.00px;font-size:13px;line-height:13px;color:#8e8e8e;transform:scaleX(0.9150);">Fill:</span><div class="b" style="left:1562px;top:745.5px;width:337.5px;height:1px;background:#454545;"></div><div class="b" style="left:1562px;top:796.5px;width:337.5px;height:1px;background:#454545;"></div><div class="b" style="left:1562px;top:847.5px;width:337.5px;height:1px;background:#454545;"></div><div class="b" style="left:1562px;top:878.5px;width:337.5px;height:1px;background:#454545;"></div><div class="b" style="left:1562px;top:909.5px;width:337.5px;height:1px;background:#454545;"></div><div class="b" style="left:1562px;top:941px;width:337.5px;height:1px;background:#454545;"></div><div class="b" style="left:1562px;top:996px;width:337.5px;height:1px;background:#454545;"></div><div class="b" style="left:1599.5px;top:714px;width:1px;height:283px;background:#474747;"></div><div class="b" style="left:1899.5px;top:714px;width:18.5px;height:283px;background:#4b4b4b;"></div><div class="b" style="left:1902px;top:736px;width:14.5px;height:106px;background:#6b6b6b;border-radius:1px"></div><div class="b" style="left:1562px;top:997px;width:356px;height:1.8px;background:#3e3e3e;"></div><span class="t" style="left:1653.00px;top:724.00px;font-size:13px;line-height:13px;color:#e4e4e4;transform:scaleX(0.9757);">Lines in center</span><span class="t" style="left:1657.00px;top:765.50px;font-size:13px;line-height:13px;color:#e4e4e4;transform:scaleX(0.9224);">Layer 4</span><span class="t" style="left:1657.00px;top:817.00px;font-size:13px;line-height:13px;color:#e4e4e4;transform:scaleX(0.9632);">center circle</span><span class="t" style="left:1653.00px;top:858.00px;font-size:13px;line-height:13px;color:#e4e4e4;transform:scaleX(0.9745);">large petals</span><span class="t" style="left:1653.00px;top:889.00px;font-size:13px;line-height:13px;color:#e4e4e4;transform:scaleX(0.9907);">small petals</span><span class="t" style="left:1673.00px;top:920.00px;font-size:13px;line-height:13px;color:#e4e4e4;transform:scaleX(0.9170);">Lines</span><span class="t" style="left:1677.00px;top:962.00px;font-size:13px;line-height:13px;color:#e4e4e4;transform:scaleX(0.9616);">Layer 3 copy 3</span><svg class="b" style="left:0;top:0" width="1920" height="1057" viewBox="0 0 1920 1057"><defs><pattern id="chk" width="8" height="8" patternUnits="userSpaceOnUse"><rect width="8" height="8" fill="#ffffff"/><rect width="4" height="4" fill="#cfcfcf"/><rect x="4" y="4" width="4" height="4" fill="#cfcfcf"/></pattern></defs><path d="M1573 730.5q7.800 -9.600 15.600 0q-7.800 9.600 -15.600 0z" fill="#e0e0e0"/><circle cx="1580.8" cy="730.5" r="3.300" fill="#535353"/><circle cx="1581.7" cy="729.6" r="1.700" fill="#e0e0e0"/><path d="M1573 771.5q7.800 -9.600 15.600 0q-7.800 9.600 -15.600 0z" fill="#e0e0e0"/><circle cx="1580.8" cy="771.5" r="3.300" fill="#535353"/><circle cx="1581.7" cy="770.6" r="1.700" fill="#e0e0e0"/><path d="M1573 823q7.800 -9.600 15.600 0q-7.800 9.600 -15.600 0z" fill="#e0e0e0"/><circle cx="1580.8" cy="823" r="3.300" fill="#535353"/><circle cx="1581.7" cy="822.1" r="1.700" fill="#e0e0e0"/><path d="M1573 864q7.800 -9.600 15.600 0q-7.800 9.600 -15.600 0z" fill="#e0e0e0"/><circle cx="1580.8" cy="864" r="3.300" fill="#535353"/><circle cx="1581.7" cy="863.1" r="1.700" fill="#e0e0e0"/><path d="M1573 895q7.800 -9.600 15.600 0q-7.800 9.600 -15.600 0z" fill="#e0e0e0"/><circle cx="1580.8" cy="895" r="3.300" fill="#535353"/><circle cx="1581.7" cy="894.1" r="1.700" fill="#e0e0e0"/><path d="M1573 926q7.800 -9.600 15.600 0q-7.800 9.600 -15.600 0z" fill="#e0e0e0"/><circle cx="1580.8" cy="926" r="3.300" fill="#535353"/><circle cx="1581.7" cy="925.1" r="1.700" fill="#e0e0e0"/><path d="M1573 968.5q7.800 -9.600 15.600 0q-7.800 9.600 -15.600 0z" fill="#e0e0e0"/><circle cx="1580.8" cy="968.5" r="3.300" fill="#535353"/><circle cx="1581.7" cy="967.6" r="1.700" fill="#e0e0e0"/><rect x="1605" y="752" width="39.5" height="39.5" fill="#ffffff" stroke="#1e1e1e" stroke-width="1"/><rect x="1606" y="753" width="37.5" height="37.5" fill="url(#chk)"/><rect x="1605" y="803.5" width="39.5" height="39.5" fill="#ffffff" stroke="#1e1e1e" stroke-width="1"/><rect x="1606" y="804.5" width="37.5" height="37.5" fill="url(#chk)"/><rect x="1625" y="948.5" width="39.5" height="39.5" fill="#ffffff" stroke="#1e1e1e" stroke-width="1"/><rect x="1626" y="949.5" width="37.5" height="37.5" fill="url(#chk)"/><circle cx="1624.500" cy="772" r="3.200" fill="#f0e052"/><path d="M1627 968.500l5.500 -3.300h3.500l3.500 3.300l-3.500 3.300h-3.500z" fill="#1e9a2e"/><path d="M1632.500 965.200h3.500l3.500 3.300l-3.500 3.300h-3.500z" fill="#157a22"/><path d="M1618.5 724q0 -1.200 1.200 -1.200h5.300l1.500 2h10.500v11.700h-18.500z" fill="#dcdcdc"/><path d="M1618.5 857.5q0 -1.200 1.200 -1.200h5.300l1.500 2h10.500v11.700h-18.500z" fill="#dcdcdc"/><path d="M1619.1 887.6h6.500l1.500 2h10.500v3.500h-10l-1.500 -2h-7z" fill="none" stroke="#dcdcdc" stroke-width="1.200"/><path d="M1618.5 894h18.500v7.500h-18.500z" fill="#dcdcdc"/><path d="M1638.5 919.5q0 -1.200 1.200 -1.200h5.300l1.500 2h10.500v11.700h-18.500z" fill="#dcdcdc"/><path d="M1607 725l3.500 6l-3.500 6" stroke="#d0d0d0" stroke-width="1.100" fill="none"/><path d="M1607 858.5l3.500 6l-3.500 6" stroke="#d0d0d0" stroke-width="1.100" fill="none"/><path d="M1627.5 920.5l3.500 6l-3.500 6" stroke="#d0d0d0" stroke-width="1.100" fill="none"/><path d="M1605 892l5 5l5 -5" stroke="#d0d0d0" stroke-width="1.100" fill="none"/><circle cx="1582" cy="624.500" r="4.200" fill="none" stroke="#e0e0e0" stroke-width="1.600"/><path d="M1585 628l4 4" stroke="#e0e0e0" stroke-width="2"/><path d="M1662.500 626.300l3.800 3.800l3.800 -3.800" stroke="#d0d0d0" stroke-width="1" fill="none"/><path d="M1714 658.500l3.500 3.500l3.500 -3.500M1836.500 659.500l3.500 3.500l3.500 -3.500M1836.500 694.500l3.500 3.500l3.500 -3.500" stroke="#626262" stroke-width="1.100" fill="none"/><rect x="1690.800" y="618.800" width="14.500" height="12" fill="none" stroke="#e2e2e2" stroke-width="1.300"/><path d="M1692.500 629l3.500 -5l2.500 3l2 -2l3 4z" fill="#e2e2e2"/><circle cx="1727.500" cy="625" r="6.300" fill="none" stroke="#e2e2e2" stroke-width="1.400"/><path d="M1723 629.500a6.300 6.300 0 0 0 9 -9z" fill="#e2e2e2"/><path d="M1751.500 619h12.500v3.600h-1.200l-0.500 -1.800h-3.300v9l1.800 0.500v1.200h-6.100v-1.200l1.800 -0.500v-9h-3.300l-0.500 1.800h-1.200z" fill="#e2e2e2"/><rect x="1782" y="620.500" width="11.500" height="10" fill="none" stroke="#e2e2e2" stroke-width="1.300"/><rect x="1780.2" y="618.7" width="3.600" height="3.600" fill="#535353" stroke="#e2e2e2" stroke-width="1"/><rect x="1791.7" y="618.7" width="3.600" height="3.600" fill="#535353" stroke="#e2e2e2" stroke-width="1"/><rect x="1780.2" y="628.7" width="3.600" height="3.600" fill="#535353" stroke="#e2e2e2" stroke-width="1"/><rect x="1791.7" y="628.7" width="3.600" height="3.600" fill="#535353" stroke="#e2e2e2" stroke-width="1"/><path d="M1816.500 618.500h5.500l3 3v9.500h-8.500z" fill="none" stroke="#e2e2e2" stroke-width="1.300"/><rect x="1811.500" y="625" width="7" height="7" fill="#e2e2e2" stroke="#535353" stroke-width="0.800"/><rect x="1840.500" y="615" width="10" height="21" rx="5" fill="#3c3c3c"/><circle cx="1845.500" cy="619.500" r="5" fill="#e4e4e4"/><rect x="1611.300" y="688.300" width="13.600" height="13.200" fill="none" stroke="#8e8e8e" stroke-width="1"/><rect x="1611.8" y="688.8" width="4.200" height="4.100" fill="#8e8e8e"/><rect x="1620.2" y="688.8" width="4.200" height="4.100" fill="#8e8e8e"/><rect x="1616" y="692.9" width="4.200" height="4.100" fill="#8e8e8e"/><rect x="1611.8" y="697" width="4.200" height="4.100" fill="#8e8e8e"/><rect x="1620.2" y="697" width="4.200" height="4.100" fill="#8e8e8e"/><path d="M1654.300 686.800q-5 3 -8.800 9.600l2.200 1.800q5.300 -5.200 6.600 -11.400z" fill="#8e8e8e"/><path d="M1644.600 697.300q-2.600 -0.400 -3.400 2q-0.500 2 -2.600 2.800q4.800 1.700 7.200 -1.400q1.100 -1.600 -1.200 -3.400z" fill="#8e8e8e"/><path transform="translate(1672.500 695.300) scale(0.830)" d="M0 -9.5L3.2 -5.6H1V-1H5.6V-3.2L9.5 0L5.6 3.2V1H1V5.6H3.2L0 9.5L-3.2 5.6H-1V1H-5.6V3.2L-9.5 0L-5.6 -3.2V-1H-1V-5.6H-3.2Z" fill="#8e8e8e"/><path d="M1694 687.800V699.500H1708.500M1690.800 690.500H1702.500L1706 694V702.300" stroke="#8e8e8e" stroke-width="1.300" fill="none"/><rect x="1693.400" y="701.300" width="1.200" height="1.200" fill="#8e8e8e"/><rect x="1706.600" y="687.500" width="1.200" height="1.200" fill="#8e8e8e"/><rect x="1721.800" y="693.200" width="12.700" height="8.900" rx="1" fill="#8e8e8e"/><path d="M1724.700 693.200v-2.200a3.450 3.450 0 0 1 6.900 0v2.200" fill="none" stroke="#8e8e8e" stroke-width="1.700"/><circle cx="1728.150" cy="697.600" r="1.300" fill="#535353"/><path d="M1904 729l4.200 -4.200l4.200 4.200" stroke="#8e8e8e" stroke-width="1.200" fill="none"/><path d="M1904 982l4.200 4.200l4.200 -4.200" stroke="#8e8e8e" stroke-width="1.200" fill="none"/><g transform="translate(0 0.700)"><g fill="none" stroke="#8a8a8a" stroke-width="1.500"><path d="M1672.300 1010.300h-2.600a3.700 3.700 0 0 0 0 7.400h2.600"/><path d="M1676.700 1010.300h2.600a3.700 3.700 0 0 1 0 7.400h-2.600"/><path d="M1670.300 1014h8.400"/></g><rect x="1734.500" y="1007.800" width="15.500" height="11.600" rx="1" fill="#8a8a8a"/><circle cx="1742.300" cy="1013.600" r="3.500" fill="#535353"/><circle cx="1775.500" cy="1013.500" r="6.200" fill="none" stroke="#dcdcdc" stroke-width="1.400"/><path d="M1771.100 1017.900a6.200 6.200 0 0 0 8.800 -8.800z" fill="#dcdcdc"/><path d="M1782.700 1021.300h4.400l-2.200 2.400z" fill="#f0f0f0"/><path d="M1802 1007.600h6.200q0.600 0 0.600 0.600v0.500h-7.400v-0.500q0 -0.600 0.600 -0.600z" fill="#dcdcdc"/><rect x="1801.500" y="1009.700" width="16" height="9.900" rx="1" fill="#dcdcdc"/><rect x="1836.200" y="1007" width="12.800" height="13" fill="none" stroke="#e0e0e0" stroke-width="1.500"/><path d="M1842.600 1010.200v6.600M1839.300 1013.500h6.600" stroke="#e0e0e0" stroke-width="1.500"/><path d="M1870 1010.200h13M1874.200 1010v-2.200h4.600v2.200M1871.500 1010.500l0.800 10.500h8.400l0.800 -10.500" fill="none" stroke="#8a8a8a" stroke-width="1.200"/><path d="M1874.600 1012.500v6.500M1876.500 1012.500v6.500M1878.400 1012.500v6.500" stroke="#8a8a8a" stroke-width="1"/><path d="M1717.500 1021.800h2.400l-1.200 1.300z" fill="#7a7a7a"/></g></svg><span class="t" style="left:1701.50px;top:1005.91px;font-size:17px;line-height:17px;color:#8a8a8a;font-style:italic;transform:scaleX(1.0588);">fx</span>
<div class="b" style="left:1918px;top:31px;width:2px;height:999px;background:#383838;"></div>
<div class="b" style="left:0px;top:1030px;width:1920px;height:27px;background:linear-gradient(to right,#1a1f1f 0%,#1b2020 35%,#1c1d1d 60%,#1c1c1c 100%);"></div>
<svg class="b" style="left:0;top:0" width="1920" height="1057" viewBox="0 0 1920 1057"><rect x="740" y="1030" width="61" height="27" fill="#464c4c"/><path d="M20 1046.500l9 -1.200v9.200h-9z M30 1045.200l10.500 -1.500v10.800h-10.500z M20 1055.500h9v5h-9z M30 1055.500h10.500v5h-10.500z" fill="#ffffff"/><circle cx="92.500" cy="1052.700" r="10.100" fill="none" stroke="#ffffff" stroke-width="3"/><circle cx="150" cy="1056.800" r="8.800" fill="none" stroke="#f4f4f4" stroke-width="3"/><path d="M200.500 1045v15M213.500 1045v15M200.500 1049.500h13" stroke="#fff" stroke-width="1.300" fill="none"/><rect x="217" y="1045" width="1.600" height="3.500" fill="#fff"/><rect x="216.500" y="1052" width="3" height="3" fill="#fff"/><path d="M266 1048v-4.500q0 -2 2 -2h11q2 0 2 2v4.500" fill="none" stroke="#3a9fd8" stroke-width="2"/><rect x="259" y="1045.500" width="29" height="14" rx="2" fill="#f4f4f4"/><rect x="268.500" y="1053.500" width="4.500" height="5" fill="#f25022"/><rect x="274" y="1053.500" width="4.500" height="5" fill="#7fba00"/><path d="M322.500 1045.500q0 -2 2 -2h7l3 2.500h-12z" fill="#e0a12a"/><rect x="322.500" y="1045.500" width="27" height="14" rx="1.500" fill="#f7d56e"/><rect x="328" y="1054.500" width="16" height="4" rx="1.500" fill="#4a8fd0"/><path d="M393 1047l9 -5l10.500 6v11h-19.500z" fill="#1a6fc4"/><path d="M402 1042l10.500 6l-5 3.500l-9 -6z" fill="#35a3ea"/><rect x="383.500" y="1048.500" width="13" height="10" rx="1.500" fill="#0f5aa8"/><circle cx="390" cy="1056" r="3" fill="none" stroke="#fff" stroke-width="1.800"/><defs><radialGradient id="ffg" cx="0.500" cy="0.300" r="0.800"><stop offset="0" stop-color="#ffde3e"/><stop offset="0.500" stop-color="#ff8a18"/><stop offset="1" stop-color="#e8352a"/></radialGradient></defs><circle cx="460" cy="1058" r="14.500" fill="url(#ffg)"/><path d="M466 1040q4 4 4.500 9l-8 2q1 -6 3.500 -11z" fill="#ffc93a"/><circle cx="458" cy="1058.500" r="7" fill="#7b3fd0"/><circle cx="522" cy="1056" r="15" fill="#e33b2e"/><path d="M522 1056l-14 -5a15 15 0 0 0 3 17z" fill="#2a9d4a"/><path d="M522 1056l14.500 -4a15 15 0 0 1 -3 15z" fill="#f6c026"/><circle cx="522" cy="1056" r="7.500" fill="#f2f2f2"/><circle cx="522" cy="1056" r="5.800" fill="#3f7fe8"/><circle cx="646" cy="1056" r="15" fill="#e33b2e"/><path d="M646 1056l-14 -5a15 15 0 0 0 3 17z" fill="#2a9d4a"/><path d="M646 1056l14.500 -4a15 15 0 0 1 -3 15z" fill="#f6c026"/><circle cx="646" cy="1056" r="7.500" fill="#f2f2f2"/><circle cx="646" cy="1056" r="5.800" fill="#3f7fe8"/><circle cx="654" cy="1058" r="5" fill="#c8d4e8"/><g fill="none" stroke="#f4f4f4" stroke-width="2"><circle cx="579" cy="1050.500" r="6.500"/><circle cx="589" cy="1050.500" r="6.500"/><circle cx="576" cy="1058" r="6.500"/><circle cx="592" cy="1058" r="6.500"/></g><g fill="#f4f4f4"><rect x="705.300" y="1044.500" width="4.400" height="6" rx="1" transform="rotate(0 707.500 1056.500)"/><rect x="705.300" y="1044.500" width="4.400" height="6" rx="1" transform="rotate(45 707.500 1056.500)"/><rect x="705.300" y="1044.500" width="4.400" height="6" rx="1" transform="rotate(90 707.500 1056.500)"/><rect x="705.300" y="1044.500" width="4.400" height="6" rx="1" transform="rotate(135 707.500 1056.500)"/><rect x="705.300" y="1044.500" width="4.400" height="6" rx="1" transform="rotate(180 707.500 1056.500)"/><rect x="705.300" y="1044.500" width="4.400" height="6" rx="1" transform="rotate(225 707.500 1056.500)"/><rect x="705.300" y="1044.500" width="4.400" height="6" rx="1" transform="rotate(270 707.500 1056.500)"/><rect x="705.300" y="1044.500" width="4.400" height="6" rx="1" transform="rotate(315 707.500 1056.500)"/></g><circle cx="707.500" cy="1056.500" r="7" fill="none" stroke="#f4f4f4" stroke-width="3.600"/><rect x="756" y="1040" width="27.500" height="26" rx="4" fill="#001e36" stroke="#0b3556" stroke-width="1"/></svg><span class="t" style="left:761.00px;top:1044.80px;font-size:15px;line-height:15px;color:#31a8ff;font-weight:bold;transform:scaleX(0.9811);">Ps</span><svg class="b" style="left:0;top:0" width="1920" height="1057" viewBox="0 0 1920 1057"><path d="M1657.500 1057l6.500 -6.500l6.500 6.500" stroke="#fff" stroke-width="1.400" fill="none"/><rect x="1689" y="1050.500" width="15" height="8" fill="#f0f0f0"/><path d="M1686.500 1048v3M1684.500 1051h4v3h-4z" stroke="#f0f0f0" stroke-width="1.200" fill="none"/><g fill="none" stroke="#f0f0f0" stroke-width="1.500"><path d="M1718.500 1057a13 13 0 0 1 13 -9.500"/><path d="M1722.500 1058a9 9 0 0 1 9 -6"/></g><path d="M1744.500 1053.500h3.500l4.500 -4v10" fill="none" stroke="#f0f0f0" stroke-width="1.300"/><path d="M1755 1051.500q2.500 3 0.500 7M1758.500 1049q3.500 4.500 1 9.500" stroke="#f0f0f0" stroke-width="1.100" fill="none"/><path d="M1761.500 1046q4 6 2 12" stroke="#777" stroke-width="1" fill="none"/><rect x="1869.500" y="1046" width="19.500" height="14" fill="none" stroke="#f0f0f0" stroke-width="1.400"/><rect x="1914" y="1030" width="1" height="27" fill="#5a5a5a"/></svg><span class="t" style="left:1785.50px;top:1035.80px;font-size:15px;line-height:15px;color:#ffffff;transform:scaleX(0.9129);">3:25 PM</span>
</body></html>
